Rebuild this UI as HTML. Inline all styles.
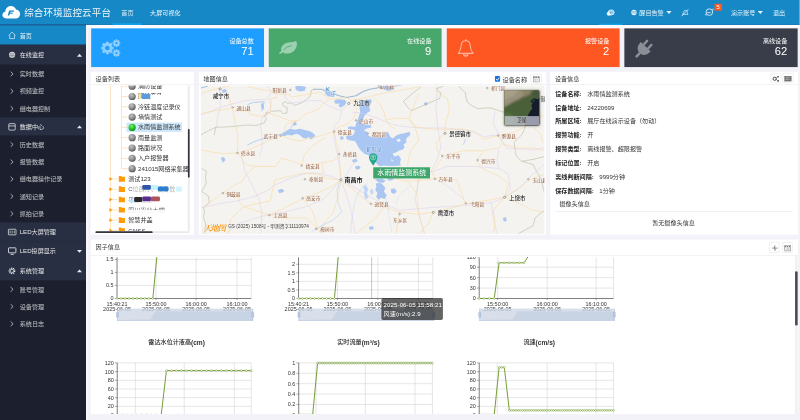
<!DOCTYPE html>
<html lang="zh-CN"><head><meta charset="utf-8"><title>综合环境监控云平台</title>
<style>
html,body{margin:0;padding:0;width:800px;height:420px;overflow:hidden;background:#f2f2f8;}
#app{position:absolute;left:0;top:0;width:1860.47px;height:976.74px;transform:scale(0.43);transform-origin:0 0;font-family:"Liberation Sans","Noto Sans CJK SC",sans-serif;overflow:hidden;background:#f2f2f8;}
#app div,#app svg{position:absolute;box-sizing:border-box;}
#app svg{overflow:visible;}
.t{white-space:nowrap;}
svg text{font-family:"Liberation Sans","Noto Sans CJK SC",sans-serif;}
</style></head><body><div id="app">
<div style="left:199.77px;top:58.14px;width:1660.7px;height:7.44px;background:#fbfafd;"></div>
<div style="left:199.77px;top:58.14px;width:5.35px;height:918.6px;background:#f8f7fb;"></div>
<div style="left:0px;top:57.91px;width:199.53px;height:918.84px;background:#1c202e;"></div>
<div style="left:0px;top:57.91px;width:199.53px;height:46.05px;background:#1688c6;"></div>
<div style="left:0px;top:103.95px;width:199.53px;height:46.28px;background:#282f42;"></div>
<div style="left:0px;top:273.26px;width:199.53px;height:42.09px;background:#282f42;"></div>
<div style="left:0px;top:516.98px;width:199.53px;height:44.88px;background:#282f42;"></div>
<div style="left:0px;top:561.86px;width:199.53px;height:44.88px;background:#282f42;"></div>
<div style="left:0px;top:606.74px;width:199.53px;height:44.88px;background:#282f42;"></div>
<div class="t" style="left:45.81px;top:73.49px;font-size:14.2px;line-height:20px;color:rgba(255,255,255,.88);font-weight:normal;">首页</div>
<div class="t" style="left:45.81px;top:118.14px;font-size:14.2px;line-height:20px;color:rgba(255,255,255,.88);font-weight:normal;">在线监控</div>
<div class="t" style="left:45.81px;top:161.86px;font-size:14.2px;line-height:20px;color:rgba(255,255,255,.72);font-weight:normal;">实时数据</div>
<div class="t" style="left:45.81px;top:202.09px;font-size:14.2px;line-height:20px;color:rgba(255,255,255,.72);font-weight:normal;">视频监控</div>
<div class="t" style="left:45.81px;top:242.33px;font-size:14.2px;line-height:20px;color:rgba(255,255,255,.72);font-weight:normal;">继电器控制</div>
<div class="t" style="left:45.81px;top:284.88px;font-size:14.2px;line-height:20px;color:rgba(255,255,255,.88);font-weight:normal;">数据中心</div>
<div class="t" style="left:45.81px;top:326.05px;font-size:14.2px;line-height:20px;color:rgba(255,255,255,.72);font-weight:normal;">历史数据</div>
<div class="t" style="left:45.81px;top:366.28px;font-size:14.2px;line-height:20px;color:rgba(255,255,255,.72);font-weight:normal;">报警数据</div>
<div class="t" style="left:45.81px;top:406.51px;font-size:14.2px;line-height:20px;color:rgba(255,255,255,.72);font-weight:normal;">继电器操作记录</div>
<div class="t" style="left:45.81px;top:446.51px;font-size:14.2px;line-height:20px;color:rgba(255,255,255,.72);font-weight:normal;">通知记录</div>
<div class="t" style="left:45.81px;top:486.74px;font-size:14.2px;line-height:20px;color:rgba(255,255,255,.72);font-weight:normal;">抓拍记录</div>
<div class="t" style="left:45.81px;top:529.77px;font-size:14.2px;line-height:20px;color:rgba(255,255,255,.88);font-weight:normal;">LED大屏管理</div>
<div class="t" style="left:45.81px;top:573.72px;font-size:14.2px;line-height:20px;color:rgba(255,255,255,.88);font-weight:normal;">LED投屏显示</div>
<div class="t" style="left:45.81px;top:619.77px;font-size:14.2px;line-height:20px;color:rgba(255,255,255,.88);font-weight:normal;">系统管理</div>
<div class="t" style="left:45.81px;top:662.79px;font-size:14.2px;line-height:20px;color:rgba(255,255,255,.72);font-weight:normal;">账号管理</div>
<div class="t" style="left:45.81px;top:702.79px;font-size:14.2px;line-height:20px;color:rgba(255,255,255,.72);font-weight:normal;">设备管理</div>
<div class="t" style="left:45.81px;top:743.02px;font-size:14.2px;line-height:20px;color:rgba(255,255,255,.72);font-weight:normal;">系统日志</div>
<svg style="left:0px;top:57.91px;" width="199.53" height="918.84" viewBox="0 24.9 85.8 395.1"><path d="M10.6 71.60000000000001 L13.1 73.9 L10.6 76.2" fill="none" stroke="rgba(255,255,255,.8)" stroke-width="0.75"/><path d="M10.6 88.9 L13.1 91.2 L10.6 93.5" fill="none" stroke="rgba(255,255,255,.8)" stroke-width="0.75"/><path d="M10.6 106.2 L13.1 108.5 L10.6 110.8" fill="none" stroke="rgba(255,255,255,.8)" stroke-width="0.75"/><path d="M10.6 142.2 L13.1 144.5 L10.6 146.8" fill="none" stroke="rgba(255,255,255,.8)" stroke-width="0.75"/><path d="M10.6 159.5 L13.1 161.8 L10.6 164.10000000000002" fill="none" stroke="rgba(255,255,255,.8)" stroke-width="0.75"/><path d="M10.6 176.79999999999998 L13.1 179.1 L10.6 181.4" fill="none" stroke="rgba(255,255,255,.8)" stroke-width="0.75"/><path d="M10.6 194.0 L13.1 196.3 L10.6 198.60000000000002" fill="none" stroke="rgba(255,255,255,.8)" stroke-width="0.75"/><path d="M10.6 211.29999999999998 L13.1 213.6 L10.6 215.9" fill="none" stroke="rgba(255,255,255,.8)" stroke-width="0.75"/><path d="M10.6 287.0 L13.1 289.3 L10.6 291.6" fill="none" stroke="rgba(255,255,255,.8)" stroke-width="0.75"/><path d="M10.6 304.2 L13.1 306.5 L10.6 308.8" fill="none" stroke="rgba(255,255,255,.8)" stroke-width="0.75"/><path d="M10.6 321.5 L13.1 323.8 L10.6 326.1" fill="none" stroke="rgba(255,255,255,.8)" stroke-width="0.75"/><path d="M77 56.599999999999994 L79.5 53.8 L82 56.599999999999994 Z" fill="rgba(255,255,255,.9)"/><path d="M77 128.3 L79.5 125.5 L82 128.3 Z" fill="rgba(255,255,255,.9)"/><path d="M77 249.89999999999998 L79.5 252.7 L82 249.89999999999998 Z" fill="rgba(255,255,255,.9)"/><path d="M77 272.3 L79.5 269.5 L82 272.3 Z" fill="rgba(255,255,255,.9)"/><path d="M8.7 35.4 L12.1 32 L15.5 35.4 M9.7 34.8 V38.5 H14.5 V34.8" fill="none" stroke="rgba(255,255,255,.85)" stroke-width="0.7"/><circle cx="12.1" cy="54.8" r="3.1" fill="rgba(255,255,255,.8)"/><path d="M9.8 53.8 H14.4 M9.6 55.4 H14.6 M10.8 56.8 H13.4" stroke="#282f42" stroke-width="0.4" fill="none"/><rect x="8.8" y="123.6" width="6.4" height="6.4" rx="0.6" fill="none" stroke="rgba(255,255,255,.85)" stroke-width="0.8"/><path d="M8.8 125.9 H15.2" stroke="rgba(255,255,255,.85)" stroke-width="0.8"/><rect x="8.4" y="229.2" width="7.6" height="5.6" rx="0.5" fill="none" stroke="rgba(255,255,255,.85)" stroke-width="0.8"/><path d="M10.1 230.6 V233.4 M12.2 230.6 V233.4 M14.3 230.6 V233.4" stroke="rgba(255,255,255,.85)" stroke-width="0.7"/><rect x="8.5" y="247.8" width="7.4" height="5" rx="0.5" fill="none" stroke="rgba(255,255,255,.85)" stroke-width="0.9"/><path d="M10.6 254.3 H13.8" stroke="rgba(255,255,255,.85)" stroke-width="0.9"/><circle cx="12" cy="270.9" r="2.7" fill="none" stroke="rgba(255,255,255,.85)" stroke-width="1.3" stroke-dasharray="1.2 0.7"/><circle cx="12" cy="270.9" r="1.6" fill="none" stroke="rgba(255,255,255,.85)" stroke-width="0.7"/></svg>
<div style="left:0px;top:0px;width:1860.47px;height:57.91px;background:#1688c6;"></div>
<div style="left:0px;top:56.05px;width:1860.47px;height:1.86px;background:rgba(0,70,130,.28);"></div>
<div style="left:0px;top:57.44px;width:199.77px;height:1.4px;background:#1d4f7e;"></div>
<svg style="left:0px;top:0px;" width="55.81" height="57.91" viewBox="0 0 24 24.9"><path d="M6.2 18.4 C3.6 18.4 2.4 16.6 2.4 15 C2.4 13.2 3.7 11.9 5.3 11.7 C5.4 8.7 7.8 6.1 10.9 6.1 C13.3 6.1 15.2 7.5 16 9.5 C18.4 9.7 20.1 11.6 20.1 13.9 C20.1 16.4 18.2 18.4 15.8 18.4 Z" fill="#fff"/><path d="M9.2 10.6 H14.2 L13.8 11.8 H10.6 L10.3 12.7 H13 L12.6 13.8 H9.9 L9.3 15.6 H7.7 Z" fill="#1688c6"/></svg>
<div class="t" style="left:56.28px;top:13.57px;font-size:22px;line-height:31px;color:rgba(255,255,255,.92);font-weight:normal;letter-spacing:0.45px;">综合环境监控云平台</div>
<div class="t" style="left:282.09px;top:19.30px;font-size:14.2px;line-height:20px;color:rgba(255,255,255,.85);font-weight:normal;">首页</div>
<div class="t" style="left:349.07px;top:19.30px;font-size:14.2px;line-height:20px;color:rgba(255,255,255,.95);font-weight:normal;">大屏可视化</div>
<div style="left:261.86px;top:53.95px;width:68.37px;height:3.95px;background:#12a3ea;"></div>
<div style="left:1393.02px;top:54.88px;width:53.49px;height:3.02px;background:#12a3ea;"></div>
<div class="t" style="left:1486.74px;top:19.30px;font-size:14.2px;line-height:20px;color:rgba(255,255,255,.9);font-weight:normal;">醒目告警</div>
<div class="t" style="left:1700px;top:19.30px;font-size:14.2px;line-height:20px;color:rgba(255,255,255,.9);font-weight:normal;">演示账号</div>
<div class="t" style="left:1797.67px;top:19.30px;font-size:14.2px;line-height:20px;color:rgba(255,255,255,.9);font-weight:normal;">退出</div>
<svg style="left:1372.09px;top:0px;" width="488.37" height="57.91" viewBox="590 0 210 24.9"><ellipse cx="611.2" cy="12.4" rx="3" ry="2.5" fill="rgba(255,255,255,.55)" stroke="rgba(255,255,255,.9)" stroke-width="0.8"/><ellipse cx="609" cy="13.7" rx="2.3" ry="2" fill="rgba(255,255,255,.9)"/><circle cx="610.4" cy="12.9" r="0.75" fill="#1688c6"/><circle cx="634" cy="12.5" r="2.7" fill="rgba(255,255,255,.9)"/><path d="M631.8 11.6 H636.2 M631.6 13 H636.4" stroke="#1688c6" stroke-width="0.45"/><path d="M666.4 11.1 H671.6 L669 14.1 Z" fill="rgba(255,255,255,.9)"/><path d="M757.8 11.1 H763 L760.4 14.1 Z" fill="rgba(255,255,255,.9)"/><path d="M682.6 14.4 C683.4 13.6 683.2 11.2 684.9 10.4 C686.6 9.8 687.5 11.4 687.4 12.6 C687.4 13.6 687.8 14 688 14.4 Z" fill="none" stroke="rgba(255,255,255,.9)" stroke-width="0.7"/><path d="M681.6 16.2 L688.4 9.2" stroke="rgba(255,255,255,.9)" stroke-width="0.8"/><circle cx="709.4" cy="12.1" r="3.3" fill="none" stroke="rgba(255,255,255,.9)" stroke-width="0.85"/><path d="M707.2 12.6 H710.8" stroke="rgba(255,255,255,.9)" stroke-width="0.8"/><path d="M706.3 13.6 C704.6 14.6 705 15.4 707 14.9 M712.6 10.4 C714.4 9.4 713.8 8.7 711.9 9.3" fill="none" stroke="rgba(255,255,255,.9)" stroke-width="0.6"/></svg>
<div style="left:1662.09px;top:8.6px;width:16.74px;height:16.05px;background:#ff5722;border-radius:1px;"></div>
<div class="t" style="left:1670.23px;transform:translateX(-50%);top:7.13px;font-size:13.5px;line-height:19px;color:#fff;font-weight:normal;">5</div>
<div style="left:211.63px;top:65.81px;width:402.33px;height:90px;background:#1e9fff;"></div>
<div class="t" style="right:1270.23px;top:86.05px;font-size:14.2px;line-height:20px;color:#fff;font-weight:normal;">设备总数</div>
<div class="t" style="right:1270.7px;top:101.30px;font-size:26px;line-height:36px;color:#fff;font-weight:normal;">71</div>
<div style="left:625.12px;top:65.81px;width:402.09px;height:90px;background:#48a86c;"></div>
<div class="t" style="right:856.98px;top:86.05px;font-size:14.2px;line-height:20px;color:#fff;font-weight:normal;">在线设备</div>
<div class="t" style="right:857.44px;top:101.30px;font-size:26px;line-height:36px;color:#fff;font-weight:normal;">9</div>
<div style="left:1038.6px;top:65.81px;width:402.33px;height:90px;background:#ff5722;"></div>
<div class="t" style="right:443.26px;top:86.05px;font-size:14.2px;line-height:20px;color:#fff;font-weight:normal;">报警设备</div>
<div class="t" style="right:443.72px;top:101.30px;font-size:26px;line-height:36px;color:#fff;font-weight:normal;">2</div>
<div style="left:1452.33px;top:65.81px;width:402.33px;height:90px;background:#393d49;"></div>
<div class="t" style="right:29.53px;top:86.05px;font-size:14.2px;line-height:20px;color:#fff;font-weight:normal;">离线设备</div>
<div class="t" style="right:30px;top:101.30px;font-size:26px;line-height:36px;color:#fff;font-weight:normal;">62</div>
<svg style="left:200px;top:58.14px;" width="1660.47" height="104.65" viewBox="86 25 714 45"><g opacity="0.5"><circle cx="107.3" cy="48.1" r="3.61" fill="none" stroke="#fff" stroke-width="2.61"/><rect x="105.91" y="41.80" width="2.77" height="1.69" rx="0.38" fill="#fff" transform="rotate(0.0 107.3 48.1)"/><rect x="105.91" y="41.80" width="2.77" height="1.69" rx="0.38" fill="#fff" transform="rotate(45.0 107.3 48.1)"/><rect x="105.91" y="41.80" width="2.77" height="1.69" rx="0.38" fill="#fff" transform="rotate(90.0 107.3 48.1)"/><rect x="105.91" y="41.80" width="2.77" height="1.69" rx="0.38" fill="#fff" transform="rotate(135.0 107.3 48.1)"/><rect x="105.91" y="41.80" width="2.77" height="1.69" rx="0.38" fill="#fff" transform="rotate(180.0 107.3 48.1)"/><rect x="105.91" y="41.80" width="2.77" height="1.69" rx="0.38" fill="#fff" transform="rotate(225.0 107.3 48.1)"/><rect x="105.91" y="41.80" width="2.77" height="1.69" rx="0.38" fill="#fff" transform="rotate(270.0 107.3 48.1)"/><rect x="105.91" y="41.80" width="2.77" height="1.69" rx="0.38" fill="#fff" transform="rotate(315.0 107.3 48.1)"/><circle cx="116.4" cy="43.2" r="2.06" fill="none" stroke="#fff" stroke-width="1.81"/><rect x="115.56" y="39.40" width="1.67" height="1.14" rx="0.23" fill="#fff" transform="rotate(0.0 116.4 43.2)"/><rect x="115.56" y="39.40" width="1.67" height="1.14" rx="0.23" fill="#fff" transform="rotate(45.0 116.4 43.2)"/><rect x="115.56" y="39.40" width="1.67" height="1.14" rx="0.23" fill="#fff" transform="rotate(90.0 116.4 43.2)"/><rect x="115.56" y="39.40" width="1.67" height="1.14" rx="0.23" fill="#fff" transform="rotate(135.0 116.4 43.2)"/><rect x="115.56" y="39.40" width="1.67" height="1.14" rx="0.23" fill="#fff" transform="rotate(180.0 116.4 43.2)"/><rect x="115.56" y="39.40" width="1.67" height="1.14" rx="0.23" fill="#fff" transform="rotate(225.0 116.4 43.2)"/><rect x="115.56" y="39.40" width="1.67" height="1.14" rx="0.23" fill="#fff" transform="rotate(270.0 116.4 43.2)"/><rect x="115.56" y="39.40" width="1.67" height="1.14" rx="0.23" fill="#fff" transform="rotate(315.0 116.4 43.2)"/><circle cx="116.4" cy="53.1" r="2.06" fill="none" stroke="#fff" stroke-width="1.81"/><rect x="115.56" y="49.30" width="1.67" height="1.14" rx="0.23" fill="#fff" transform="rotate(0.0 116.4 53.1)"/><rect x="115.56" y="49.30" width="1.67" height="1.14" rx="0.23" fill="#fff" transform="rotate(45.0 116.4 53.1)"/><rect x="115.56" y="49.30" width="1.67" height="1.14" rx="0.23" fill="#fff" transform="rotate(90.0 116.4 53.1)"/><rect x="115.56" y="49.30" width="1.67" height="1.14" rx="0.23" fill="#fff" transform="rotate(135.0 116.4 53.1)"/><rect x="115.56" y="49.30" width="1.67" height="1.14" rx="0.23" fill="#fff" transform="rotate(180.0 116.4 53.1)"/><rect x="115.56" y="49.30" width="1.67" height="1.14" rx="0.23" fill="#fff" transform="rotate(225.0 116.4 53.1)"/><rect x="115.56" y="49.30" width="1.67" height="1.14" rx="0.23" fill="#fff" transform="rotate(270.0 116.4 53.1)"/><rect x="115.56" y="49.30" width="1.67" height="1.14" rx="0.23" fill="#fff" transform="rotate(315.0 116.4 53.1)"/></g><g opacity="0.46"><path d="M296.2 41.1 C297.7 44 296.9 49 293 51.7 C289.4 54.1 284.8 54.1 282.5 52.3 L280.4 54 C279.5 54.5 278.7 53.5 279.4 52.8 L281.4 50.9 C280 47.5 283 43.6 288 42.6 C291.6 42 294.4 42.2 296.2 41.1 Z" fill="#fff"/></g><path d="M283.8 50 C285.6 47.6 288.4 46.2 291.4 45.9" fill="none" stroke="#48a86c" stroke-width="0.8" stroke-linecap="round"/><g opacity="0.55" fill="none" stroke="#fff" stroke-width="1.1" stroke-linejoin="round" stroke-linecap="round"><path d="M465.7 39.5 V40.6"/><path d="M458.3 53.4 C460.6 51 461 48.6 461.2 45.6 C461.4 42.4 463.2 40.8 465.7 40.8 C468.2 40.8 470 42.4 470.2 45.6 C470.4 48.6 470.8 51 473.1 53.4 Z"/><path d="M463.5 54.4 C463.9 56.9 467.5 56.9 467.9 54.4" fill="rgba(255,255,255,.5)"/></g><g transform="translate(645.6 46.9) rotate(43)" fill="#fff" opacity="0.42"><rect x="-4.15" y="-6.6" width="2.4" height="7" rx="1.2"/><rect x="1.75" y="-6.6" width="2.4" height="7" rx="1.2"/><path d="M-6.7 -0.2 H6.7 V1.9 A6.7 6.7 0 0 1 -6.7 1.9 Z"/><rect x="-1.3" y="8" width="2.6" height="6.4" rx="1.3"/></g></svg>
<div style="left:211.4px;top:167.44px;width:239.77px;height:378.14px;background:#fff;"></div>
<div style="left:211.4px;top:167.44px;width:239.77px;height:29.3px;border-bottom:1px solid #e2e2e2;"></div>
<div class="t" style="left:222.33px;top:173.02px;font-size:14.2px;line-height:20px;color:#333;font-weight:normal;">设备列表</div>
<div style="left:462.33px;top:167.44px;width:807.44px;height:378.14px;background:#fff;"></div>
<div style="left:462.33px;top:167.44px;width:807.44px;height:29.3px;border-bottom:1px solid #e2e2e2;"></div>
<div class="t" style="left:473.26px;top:173.02px;font-size:14.2px;line-height:20px;color:#333;font-weight:normal;">地图信息</div>
<div style="left:1279.53px;top:167.44px;width:576.05px;height:378.14px;background:#fff;"></div>
<div style="left:1279.53px;top:167.44px;width:576.05px;height:29.3px;border-bottom:1px solid #e2e2e2;"></div>
<div class="t" style="left:1290.47px;top:173.02px;font-size:14.2px;line-height:20px;color:#333;font-weight:normal;">设备信息</div>
<div style="left:211.4px;top:557.44px;width:1644.19px;height:405.12px;background:#fff;overflow:hidden;"></div>
<div style="left:211.4px;top:557.44px;width:1644.19px;height:36.28px;border-bottom:1px solid #e2e2e2;"></div>
<div class="t" style="left:222.33px;top:565.35px;font-size:14.2px;line-height:20px;color:#333;font-weight:normal;">因子信息</div>
<div style="left:211.63px;top:198.6px;width:230.7px;height:338.6px;overflow:hidden;">
<div style="left:82.79px;top:86.14px;width:128.37px;height:22.09px;background:#cfe8fb;"></div>
<svg style="left:0;top:0;" width="230.7" height="338.6" viewBox="91 85.4 99.19999999999999 145.6"><path d="M110.3 85.4 V231 M121.3 85.4 V168.48000000000002" stroke="#f9cf8f" stroke-width="0.55" fill="none"/><path d="M121.3 86.00 H127.6" stroke="#f9cf8f" stroke-width="0.55"/><path d="M121.3 96.31 H127.6" stroke="#f9cf8f" stroke-width="0.55"/><path d="M121.3 106.62 H127.6" stroke="#f9cf8f" stroke-width="0.55"/><path d="M121.3 116.93 H127.6" stroke="#f9cf8f" stroke-width="0.55"/><path d="M121.3 127.24 H127.6" stroke="#f9cf8f" stroke-width="0.55"/><path d="M121.3 137.55 H127.6" stroke="#f9cf8f" stroke-width="0.55"/><path d="M121.3 147.86 H127.6" stroke="#f9cf8f" stroke-width="0.55"/><path d="M121.3 158.17 H127.6" stroke="#f9cf8f" stroke-width="0.55"/><path d="M121.3 168.48 H127.6" stroke="#f9cf8f" stroke-width="0.55"/><defs><radialGradient id="gb" cx="0.4" cy="0.32" r="0.75"><stop offset="0" stop-color="#c4c4c4"/><stop offset="0.55" stop-color="#8c8c8c"/><stop offset="1" stop-color="#4e4e4e"/></radialGradient><radialGradient id="gg" cx="0.4" cy="0.32" r="0.75"><stop offset="0" stop-color="#7dee6a"/><stop offset="0.55" stop-color="#22c32a"/><stop offset="1" stop-color="#0f8f1c"/></radialGradient></defs><circle cx="132" cy="86.00" r="3.6" fill="url(#gb)"/><circle cx="132" cy="96.31" r="3.6" fill="url(#gb)"/><circle cx="132" cy="106.62" r="3.6" fill="url(#gb)"/><circle cx="132" cy="116.93" r="3.6" fill="url(#gb)"/><circle cx="132" cy="127.24" r="3.6" fill="url(#gg)"/><circle cx="132" cy="137.55" r="3.6" fill="url(#gb)"/><circle cx="132" cy="147.86" r="3.6" fill="url(#gb)"/><circle cx="132" cy="158.17" r="3.6" fill="url(#gb)"/><circle cx="132" cy="168.48" r="3.6" fill="url(#gb)"/><path d="M110.3 178.79 H117.6" stroke="#f9cf8f" stroke-width="0.55"/><path d="M109.2 176.89 L112.4 178.79 L109.2 180.69 Z" fill="#ff9a0a"/><path d="M118.6 175.89 H121 L121.6 176.59 H124.8 V181.49 H118.6 Z" fill="#ff9a0a"/><path d="M110.3 189.10 H117.6" stroke="#f9cf8f" stroke-width="0.55"/><path d="M109.2 187.20 L112.4 189.10 L109.2 191.00 Z" fill="#ff9a0a"/><path d="M118.6 186.20 H121 L121.6 186.90 H124.8 V191.80 H118.6 Z" fill="#ff9a0a"/><path d="M110.3 199.41 H117.6" stroke="#f9cf8f" stroke-width="0.55"/><path d="M109.2 197.51 L112.4 199.41 L109.2 201.31 Z" fill="#ff9a0a"/><path d="M118.6 196.51 H121 L121.6 197.21 H124.8 V202.11 H118.6 Z" fill="#ff9a0a"/><path d="M110.3 209.72 H117.6" stroke="#f9cf8f" stroke-width="0.55"/><path d="M109.2 207.82 L112.4 209.72 L109.2 211.62 Z" fill="#ff9a0a"/><path d="M118.6 206.82 H121 L121.6 207.52 H124.8 V212.42 H118.6 Z" fill="#ff9a0a"/><path d="M110.3 220.03 H117.6" stroke="#f9cf8f" stroke-width="0.55"/><path d="M109.2 218.13 L112.4 220.03 L109.2 221.93 Z" fill="#ff9a0a"/><path d="M118.6 217.13 H121 L121.6 217.83 H124.8 V222.73 H118.6 Z" fill="#ff9a0a"/><path d="M110.3 230.34 H117.6" stroke="#f9cf8f" stroke-width="0.55"/><path d="M109.2 228.44 L112.4 230.34 L109.2 232.24 Z" fill="#ff9a0a"/><path d="M118.6 227.44 H121 L121.6 228.14 H124.8 V233.04 H118.6 Z" fill="#ff9a0a"/></svg>
<div class="t" style="left:109.3px;top:-8.37px;font-size:14.2px;line-height:20px;color:#333;">消防设备</div>
<div class="t" style="left:109.3px;top:15.60px;font-size:14.2px;line-height:20px;color:#333;">网关产品</div>
<div class="t" style="left:109.3px;top:39.58px;font-size:14.2px;line-height:20px;color:#333;">冷链温度记录仪</div>
<div class="t" style="left:109.3px;top:63.56px;font-size:14.2px;line-height:20px;color:#333;">墒情测试</div>
<div class="t" style="left:109.3px;top:87.53px;font-size:14.2px;line-height:20px;color:#333;">水雨情监测系统</div>
<div class="t" style="left:109.3px;top:111.51px;font-size:14.2px;line-height:20px;color:#333;">雨量监测</div>
<div class="t" style="left:109.3px;top:135.49px;font-size:14.2px;line-height:20px;color:#333;">路面状况</div>
<div class="t" style="left:109.3px;top:159.47px;font-size:14.2px;line-height:20px;color:#333;">入户报警器</div>
<div class="t" style="left:109.3px;top:183.44px;font-size:14.2px;line-height:20px;color:#333;">241015网络采集器</div>
<div class="t" style="left:86.51px;top:207.42px;font-size:14.2px;line-height:20px;color:#333;">测试123</div>
<div class="t" style="left:86.51px;top:231.40px;font-size:14.2px;line-height:20px;color:#333;opacity:.8;">C位展厅、设备数</div>
<div class="t" style="left:86.51px;top:255.37px;font-size:14.2px;line-height:20px;color:#333;opacity:.8;">平台设备</div>
<div class="t" style="left:86.51px;top:279.35px;font-size:14.2px;line-height:20px;color:#333;opacity:.8;">四川农业大棚</div>
<div class="t" style="left:86.51px;top:303.33px;font-size:14.2px;line-height:20px;color:#333;">智慧井盖</div>
<div class="t" style="left:86.51px;top:327.30px;font-size:14.2px;line-height:20px;color:#333;">GNSS</div>
<div style="left:110.23px;top:17.93px;width:7.21px;height:13.49px;background:#f8e3a0;opacity:1;border-radius:3px;"></div>
<div style="left:117.44px;top:19.33px;width:20.93px;height:12.09px;background:#5b9be0;opacity:1;border-radius:3px;"></div>
<div style="left:137.91px;top:22.58px;width:31.86px;height:13.26px;background:#fff;opacity:1;border-radius:3px;"></div>
<div style="left:97.67px;top:232.79px;width:120.93px;height:15.81px;background:#fff;opacity:0.55;border-radius:3px;"></div>
<div style="left:119.77px;top:231.86px;width:19.77px;height:10.47px;background:#2d55a8;opacity:1;border-radius:3px;"></div>
<div style="left:139.53px;top:231.86px;width:16.28px;height:11.63px;background:#c4f1fb;opacity:1;border-radius:3px;"></div>
<div style="left:155.81px;top:235.12px;width:24.42px;height:11.63px;background:#2b7fd0;opacity:1;border-radius:3px;"></div>
<div style="left:197.67px;top:235.35px;width:13.95px;height:11.63px;background:#c4f1fb;opacity:0.8;border-radius:3px;"></div>
<div style="left:97.67px;top:260.49px;width:123.26px;height:13.02px;background:#fff;opacity:0.7;border-radius:3px;"></div>
<div style="left:88.37px;top:265.6px;width:16.28px;height:6.51px;background:#bfe6f7;opacity:1;border-radius:3px;"></div>
<div style="left:100px;top:259.09px;width:19.77px;height:12.09px;background:#2a2a2a;opacity:1;border-radius:3px;"></div>
<div style="left:119.77px;top:258.63px;width:19.77px;height:11.16px;background:#5a2d91;opacity:1;border-radius:3px;"></div>
<div style="left:139.53px;top:258.63px;width:20.93px;height:11.16px;background:#b0545c;opacity:1;border-radius:3px;"></div>
<div style="left:86.05px;top:289.81px;width:111.63px;height:8.6px;background:#fff;opacity:0.9;border-radius:3px;"></div>
<div style="left:100px;top:280.98px;width:102.33px;height:4.42px;background:#fff;opacity:0.6;border-radius:3px;"></div>
</div>
<div style="left:436.74px;top:198.6px;width:4.19px;height:338.6px;background:#e9e9ec;"></div>
<div style="left:436.74px;top:300px;width:4.19px;height:113.49px;background:#33343c;border-radius:3px;"></div>
<div style="left:221.63px;top:538.14px;width:219.3px;height:4.19px;background:#e9e9ec;border-radius:3px;"></div>
<div style="left:221.63px;top:538.14px;width:133.72px;height:4.19px;background:#33343c;border-radius:3px;"></div>
<svg style="left:467.44px;top:198.84px;" width="799.07" height="344.65" viewBox="201 85.5 343.6 148.2"><rect x="201" y="85.5" width="343.6" height="148.2" fill="#f5f3ef"/><clipPath id="mc"><rect x="201" y="85.5" width="343.6" height="148.2"/></clipPath><g clip-path="url(#mc)"><polyline points="313.3,89.2 321.7,89.2 330,92.4 339.5,95.7 346.7,97.5 356.2,95.7 363.3,91.5 370,89.2 380,87.4 392,86.4 402,85" fill="none" stroke="#9db8d6" stroke-width="1.1" stroke-linejoin="round" /><polyline points="201,88 208,86" fill="none" stroke="#9fc0ee" stroke-width="1.0" stroke-linejoin="round" /><polygon points="334.8,100 339,99.3 345,99.6 346.7,102 345,105 341,107.6 338.6,105.6 340,103.4 336,103.8 334.6,102.4" fill="#aac6f2"/><polygon points="383,86 392,86 395,89 389,91 384,89.5" fill="#aac6f2"/><polygon points="360,101 366,99.6 371.5,99.3 372,101.5 369.5,107 370.5,111 368,112.5 365,115 363.5,119 361.5,122.5 365,124.5 371,125 371.5,127.5 367,128.5 364,130 367,132 369,136 374,137.5 380,137 386,137.5 389,135.5 392,138 393,142 392,147 393.4,152 392,158 391,163 388,165.5 384,164 381,166.5 378,165 375,161 372,157 368,155 365,154 361,150.5 359,148 357,144 355,141 351,140.5 347,139.5 346,136.5 349,135 352,136 354.5,133.5 355,130 352,129.5 348,129 348.5,126.5 352,126.5 355.5,127 356,124 358.5,118 360.5,112 359.5,107" fill="#aac6f2"/><polygon points="388,135 391,138 393,138.4 396,135.6 400,133.9 404.8,133.3 409.5,131.8 410.6,134 409.5,136.3 407.6,137 406,139.9 407,142 403.6,144.6 405,147 403,149.4 398.8,150.6 395.2,153 392,153.4 391,140" fill="#aac6f2"/><polygon points="392,153 394.6,156.5 398.8,155.3 401.2,158.9 400,163.7 395.2,162.5 391.7,158.9" fill="#aac6f2"/><polygon points="385.7,132.4 388,132 389.6,135 391,138.7 388,139 386.6,136" fill="#aac6f2"/><polygon points="396.6,139.6 400,138.6 401,141 398,142" fill="#f5f3ef"/><polygon points="352,160 356,158.6 358,161 354,163" fill="#aac6f2"/><polygon points="355,166.6 359,165.4 361,168 357,170" fill="#aac6f2"/><polygon points="340,137 343,136 344,139 341,140" fill="#aac6f2"/><polygon points="376,183.4 380,182.4 383,184.6 385.6,188 384,191.6 387,195 385,199 381,197.6 379,200 376.4,197 377.6,193 375.4,189.6 376.6,186.6" fill="#aac6f2"/><polygon points="375,179 382,178.6 386,180.6 383,183 378,182" fill="#aac6f2"/><polygon points="391,189 395,188.4 397,191.6 394,194 391.4,192.4" fill="#aac6f2"/><polygon points="386,176 392,176.6 394,179.6 389,180.6" fill="#aac6f2"/><polygon points="363,186 366,185 368.6,188.6 367,193 369,197 366,199.6 364,195 364.6,190.6" fill="#c3d6f5"/><polygon points="370,190 373,189 374,193 371,194.6" fill="#c3d6f5"/><polygon points="376,160.6 384,160 392,161 400,162 401,165.4 393,166 385,165.6 378,165" fill="#aac6f2"/><polygon points="281.3,134 285,131.6 290,128.8 295,129.6 300,128.8 305,130 310,131.3 313,133 315.4,135.2 314,137.6 311.3,139.4 308.6,137 306,138.6 302.5,137.5 300,135 296.3,133.8 292,135.4 288,134.6 285,136 282,135.6" fill="#aac6f2"/><polyline points="247.5,145 252.5,142.5 258.8,140 265,138.4 271.3,137.5 276,135.6 281.3,134" fill="none" stroke="#aac6f2" stroke-width="0.8" stroke-linejoin="round" /><polyline points="295,122.5 292.6,125 290.6,128.4" fill="none" stroke="#aac6f2" stroke-width="0.7" stroke-linejoin="round" /><polygon points="293,123 296,122 297,124.6 294,126" fill="#aac6f2"/><polygon points="261,104 263,103 264,108 262,110" fill="#aac6f2"/><polygon points="279,190 283,189 284,191.6 280,192.6" fill="#aac6f2"/><polygon points="222,90 226,89 227,92 223,93" fill="#aac6f2"/><polygon points="369,227 373,226 374,229 370,230" fill="#aac6f2"/><polyline points="466,139 464.6,142 463.6,144.6" fill="none" stroke="#aac6f2" stroke-width="0.7" stroke-linejoin="round" /><polygon points="424,103 427,102 428,104.6 425,105.6" fill="#aac6f2"/><polygon points="503,218 506,217 507,220.6 504,221.6" fill="#aac6f2"/><polyline points="351,233 352,220 354,206 357,196 362,188 368,183" fill="none" stroke="#c9dbf6" stroke-width="0.6" stroke-linejoin="round" /><polyline points="392,233 390,220 388,208 386,198" fill="none" stroke="#cfdff7" stroke-width="0.5" stroke-linejoin="round" /><polyline points="411,186 405,190 399,196 396,204" fill="none" stroke="#cfdff7" stroke-width="0.5" stroke-linejoin="round" /><polyline points="201,134.9 208,131 216,127.2 229.8,126.7 247.6,124.9 256,125.5 264.3,123 266.7,118.3 264.6,116 267.6,114.4 266,112.6 269.6,112.8 271.4,111.2 281,110.6 283.3,113.6 287,113 287.5,107.6 283.3,105.8 282.7,102.9 285.7,101.7 288,103.4 291,102.6 295.5,105.2 302.6,102.3 310.4,96.3 311.5,90.4 314.5,89.2" fill="none" stroke="#a9b196" stroke-width="0.5" stroke-linejoin="round" /><polyline points="214.3,135 215.4,130 216,127.2" fill="none" stroke="#a9b196" stroke-width="0.5" stroke-linejoin="round" /><polyline points="201.9,168.3 206.7,171.2 205.7,177 206.4,183.6 201.9,191.2 208.6,196 209.5,202.6 203.8,207.4 204.6,212 203.8,217.9 206,224 204.6,233.7" fill="none" stroke="#a9b196" stroke-width="0.5" stroke-linejoin="round" /><polyline points="421,86.9 412,94 403.8,101.2 407,106 411.4,110.7 425,104.6 440,98.3 441,92.6 436.2,88.8 443.8,86" fill="none" stroke="#a9b196" stroke-width="0.5" stroke-linejoin="round" /><polyline points="459,86 462,89.6 465.8,92.6 466,97 467.7,102.2 472,105.6 478.1,108.8 484,108 491.5,107.9 497,110 502.9,111.7 510,115 518,120 525.8,126 524,130.6 522,134.6 518,138.6 514.4,142.2 515,148 516.3,155.5 519,158.6 522,161.2 533.4,164.5 537.2,172.2 542,179.8 543,186 544.6,193" fill="none" stroke="#a9b196" stroke-width="0.5" stroke-linejoin="round" /><polyline points="522,161.2 533.4,159.3 544.6,156.5" fill="none" stroke="#a9b196" stroke-width="0.5" stroke-linejoin="round" /><polyline points="544.6,210.6 539,214.6 535.3,217.9 533.4,225.5 526,229.6 518.2,233.7" fill="none" stroke="#a9b196" stroke-width="0.5" stroke-linejoin="round" /><polyline points="201.2,114.8 210,111.6 220.2,107.6 235.7,102.9 250,99.9 266.7,99.3 271.4,92.1 267.9,86.2" fill="none" stroke="#d8cdf0" stroke-width="0.5" stroke-linejoin="round" /><polyline points="219.6,88.6 220.8,96.9 220.2,107.6 218,116 216.6,127" fill="none" stroke="#d8cdf0" stroke-width="0.5" stroke-linejoin="round" /><polyline points="271.4,99.3 270.2,108.8 263.1,116 260.7,124.3 261.9,135 262.6,146 260,156" fill="none" stroke="#d8cdf0" stroke-width="0.5" stroke-linejoin="round" /><polyline points="283.3,92.1 286.9,99.3 292,103 300,102 310,100.6 320.5,100.5 330,106.4 341.9,110.6 346.7,105.2 351.4,100.5" fill="none" stroke="#d8cdf0" stroke-width="0.5" stroke-linejoin="round" /><polyline points="341.9,110.6 339.5,120.7 334.8,125.5 333.6,132.6 335,142 337,152 339,162 340.4,172 341,180" fill="none" stroke="#d8cdf0" stroke-width="0.5" stroke-linejoin="round" /><polyline points="241.9,156.9 244.8,170.2 253.4,187.4 259.1,198.8 261.9,212.2 261,233.7" fill="none" stroke="#d8cdf0" stroke-width="0.5" stroke-linejoin="round" /><polyline points="201.9,207.4 219.1,203.6 238.1,200.7 255.3,196 266.7,191.2 276.2,184.5 291.5,177.9 306.7,173.1 318.2,173.1 333.4,176.9 341,180" fill="none" stroke="#d8cdf0" stroke-width="0.5" stroke-linejoin="round" /><polyline points="341,180 323.9,198.8 306.7,206.5 283.9,212.2 262.9,216 238.1,223.6 226.7,233.7" fill="none" stroke="#d8cdf0" stroke-width="0.5" stroke-linejoin="round" /><polyline points="400,126 419,127.9 445.7,127.9 472.4,130.7 483.9,136.5 499,134.6" fill="none" stroke="#d8cdf0" stroke-width="0.5" stroke-linejoin="round" /><polyline points="352,112 362,113 372,116 382,120 392,124 400,126" fill="none" stroke="#d8cdf0" stroke-width="0.5" stroke-linejoin="round" /><polyline points="437.2,85.5 437.2,90.7 436.2,109.8 438.1,127.9 441,147.9 437,160 430.5,172.2 419,179.8 415.2,198.8 419,214.1 423.8,231.2 424.4,233.7" fill="none" stroke="#d8cdf0" stroke-width="0.5" stroke-linejoin="round" /><polyline points="495.3,111.7 493.4,123.1 499.1,134.6 506.7,147.9 533.4,149.8 544.6,147.9" fill="none" stroke="#d8cdf0" stroke-width="0.5" stroke-linejoin="round" /><polyline points="499,147.9 497.2,161.2 499.1,168.3" fill="none" stroke="#d8cdf0" stroke-width="0.5" stroke-linejoin="round" /><polyline points="430.5,172.2 447.6,166.4 476.2,166.4 499.1,168.3 508.6,174.1 510.5,189.3 504.8,196.9" fill="none" stroke="#d8cdf0" stroke-width="0.5" stroke-linejoin="round" /><polyline points="341,180 352,186 364,193 376,200 388,205.6 400,210.3 433.4,207.4 464.8,205.5 491.5,202.6 504.8,197.9 522,185.5 534,173 544.6,164.5" fill="none" stroke="#d8cdf0" stroke-width="0.5" stroke-linejoin="round" /><polyline points="438,179.8 449.6,187.4 464.8,199.8" fill="none" stroke="#d8cdf0" stroke-width="0.5" stroke-linejoin="round" /><polyline points="491.5,202.6 493.4,217.9 497.2,233.7" fill="none" stroke="#d8cdf0" stroke-width="0.5" stroke-linejoin="round" /><polyline points="341,180 345,190 349,202 352,214 354,226 355,233.7" fill="none" stroke="#d8cdf0" stroke-width="0.5" stroke-linejoin="round" /><polyline points="341,180 347,174 352,166 357,158" fill="none" stroke="#d8cdf0" stroke-width="0.5" stroke-linejoin="round" /><polyline points="201.2,93.9 211.9,89.8 219,88.6 223.8,87.4 230,85.5" fill="none" stroke="#f9dba4" stroke-width="0.62" stroke-linejoin="round" /><polyline points="247.6,86.2 257.1,88.6 271.4,91 276.2,93.9 290,94.5 291.9,96.9 309.8,93.9 320.5,92.1 330,99.3 346.7,97.5 351.4,100.5" fill="none" stroke="#f9dba4" stroke-width="0.62" stroke-linejoin="round" /><polyline points="201.2,113.6 215.5,110.6 232.1,108.2 233.3,110.6 248.8,110.6 250,114.2 261.9,116.5 270.2,112.4 271.4,106.4 269,99.3 277.4,96.9" fill="none" stroke="#f9dba4" stroke-width="0.62" stroke-linejoin="round" /><polyline points="270.2,113.6 281,117.1 290,120.7 297.9,120.7" fill="none" stroke="#f9dba4" stroke-width="0.62" stroke-linejoin="round" /><polyline points="330,99.3 325.2,101.7 319.3,108.8 303.8,114.8 297.9,120.7 286,124.3 284.8,130.2 281,135.6" fill="none" stroke="#f9dba4" stroke-width="0.62" stroke-linejoin="round" /><polyline points="351.4,100.5 357.4,108.8 353.8,118.3 346.7,124.3 339.5,126.7 334.8,130.2" fill="none" stroke="#f9dba4" stroke-width="0.62" stroke-linejoin="round" /><polyline points="237.6,153 248,150 258,146 268,141 276,137.6 281,135.6" fill="none" stroke="#f9dba4" stroke-width="0.62" stroke-linejoin="round" /><polyline points="281,135.6 290,139 300,141 310,138 320,136 328,133.4 334.4,131.5" fill="none" stroke="#f9dba4" stroke-width="0.62" stroke-linejoin="round" /><polyline points="334.4,131.5 336,140 338,148 339.4,154 340,164 341,172 341,180" fill="none" stroke="#f9dba4" stroke-width="0.62" stroke-linejoin="round" /><polyline points="228,93 230,100 232.1,108.2" fill="none" stroke="#f9dba4" stroke-width="0.62" stroke-linejoin="round" /><polyline points="233.3,110.6 236,126 238,136 238,146 237.6,153" fill="none" stroke="#f9dba4" stroke-width="0.62" stroke-linejoin="round" /><polyline points="201,150 212,152 224,153.6 237.6,153 241,156.9 245.7,164.5 255.3,166.4 276.2,166.4 282,157.9 299.1,163.6 302,165.5" fill="none" stroke="#f9dba4" stroke-width="0.62" stroke-linejoin="round" /><polyline points="255.3,166.4 246.7,174.1 241.9,181.7 232.4,186.4 222.9,193.1 211.4,201.7 201.9,208.4" fill="none" stroke="#f9dba4" stroke-width="0.62" stroke-linejoin="round" /><polyline points="222.9,193.1 238.1,195 240,202.6 243.8,206.5 270.5,200.7 272.4,191.2 275.3,179.8 302.9,173.1 318.2,174.1 325.8,177.9 341,180" fill="none" stroke="#f9dba4" stroke-width="0.62" stroke-linejoin="round" /><polyline points="243.8,206.5 230.5,219.8 228.6,233.7" fill="none" stroke="#f9dba4" stroke-width="0.62" stroke-linejoin="round" /><polyline points="243.8,206.5 269.6,215 283.9,208.4 302.9,198.8 322,191.2 333.4,185.5 341,180" fill="none" stroke="#f9dba4" stroke-width="0.62" stroke-linejoin="round" /><polyline points="269.6,215 283.9,217.9 306.7,217.9 318.2,229.3 321,233.7" fill="none" stroke="#f9dba4" stroke-width="0.62" stroke-linejoin="round" /><polyline points="302.9,198.8 312.4,210.3 318.2,229.3" fill="none" stroke="#f9dba4" stroke-width="0.62" stroke-linejoin="round" /><polyline points="341,180 339.1,193.1 333.4,212.2 322,225.5 318.2,229.3" fill="none" stroke="#f9dba4" stroke-width="0.62" stroke-linejoin="round" /><polyline points="306.7,165.5 322,162.6 333.4,160.7 340,157" fill="none" stroke="#f9dba4" stroke-width="0.62" stroke-linejoin="round" /><polyline points="322,162.6 323.9,174.1" fill="none" stroke="#f9dba4" stroke-width="0.62" stroke-linejoin="round" /><polyline points="301.8,165.5 304,156 310,148 318,142 326,137" fill="none" stroke="#f9dba4" stroke-width="0.62" stroke-linejoin="round" /><polyline points="373.6,97 380,104 384,112 386,120 390,126 396,129" fill="none" stroke="#f9dba4" stroke-width="0.62" stroke-linejoin="round" /><polyline points="351.4,100.5 360,99 372,96 384,93 396,91 408,89 420,86.6" fill="none" stroke="#f9dba4" stroke-width="0.62" stroke-linejoin="round" /><polyline points="386,120 396,118 408,118.6 415.2,126.9" fill="none" stroke="#f9dba4" stroke-width="0.62" stroke-linejoin="round" /><polyline points="435.3,90.7 447.6,98.3 449.6,109.8 445.7,123.1 444.8,132.6" fill="none" stroke="#f9dba4" stroke-width="0.62" stroke-linejoin="round" /><polyline points="419,93.6 414,106 409.5,117.4 415.2,126.9 430,128.8 445.7,129.8" fill="none" stroke="#f9dba4" stroke-width="0.62" stroke-linejoin="round" /><polyline points="415.2,126.9 419,140.3 411.4,149.8 409,158 407.6,165" fill="none" stroke="#f9dba4" stroke-width="0.62" stroke-linejoin="round" /><polyline points="444.8,132.6 436.2,142.2 438.1,151.7 442.9,156.5" fill="none" stroke="#f9dba4" stroke-width="0.62" stroke-linejoin="round" /><polyline points="445.7,129.8 462.9,128.8 476.2,132.6 483.9,139.3 498.2,135.5" fill="none" stroke="#f9dba4" stroke-width="0.62" stroke-linejoin="round" /><polyline points="498.2,135.5 514.4,132.6 525.8,126 533.4,117.4 544.6,115.5" fill="none" stroke="#f9dba4" stroke-width="0.62" stroke-linejoin="round" /><polyline points="498.2,135.5 502.9,144.1 499,147.9 483.9,150.7 477.2,160.3" fill="none" stroke="#f9dba4" stroke-width="0.62" stroke-linejoin="round" /><polyline points="442.9,156.5 462.9,150.7 483.9,150.7" fill="none" stroke="#f9dba4" stroke-width="0.62" stroke-linejoin="round" /><polyline points="533.4,126.9 541,134.6 543,142.2" fill="none" stroke="#f9dba4" stroke-width="0.62" stroke-linejoin="round" /><polyline points="502.9,144.1 518.2,147.9 533.4,147.9 544.6,150.5" fill="none" stroke="#f9dba4" stroke-width="0.62" stroke-linejoin="round" /><polyline points="442.9,156.9 438.1,164.5 432.4,172.2 435.3,178.8" fill="none" stroke="#f9dba4" stroke-width="0.62" stroke-linejoin="round" /><polyline points="435.3,178.8 457.2,179.8 461,191.2 465.8,203.6" fill="none" stroke="#f9dba4" stroke-width="0.62" stroke-linejoin="round" /><polyline points="477.2,160.7 482,168.3 499.1,176 508.6,183.6 504.8,196.9" fill="none" stroke="#f9dba4" stroke-width="0.62" stroke-linejoin="round" /><polyline points="465.8,203.6 485.8,200.7 504.8,196.9 518.2,189.3 529.6,179.8 544.6,174.1" fill="none" stroke="#f9dba4" stroke-width="0.62" stroke-linejoin="round" /><polyline points="371,203.7 384,207 400,212.2 419,214.1 433.4,212.2 453.4,207.4 465.8,203.6" fill="none" stroke="#f9dba4" stroke-width="0.62" stroke-linejoin="round" /><polyline points="341,180 350,187 360,195 371,203.7" fill="none" stroke="#f9dba4" stroke-width="0.62" stroke-linejoin="round" /><polyline points="419,172.2 417.2,193.1 419,214.1 424.8,233.7" fill="none" stroke="#f9dba4" stroke-width="0.62" stroke-linejoin="round" /><polyline points="407.6,181.7 417.2,193.1" fill="none" stroke="#f9dba4" stroke-width="0.62" stroke-linejoin="round" /><polyline points="433.4,212.2 428.6,223.6 419,233.7" fill="none" stroke="#f9dba4" stroke-width="0.62" stroke-linejoin="round" /><polyline points="504.8,196.9 493.4,210.3 495.3,221.7 493.4,233.7" fill="none" stroke="#f9dba4" stroke-width="0.62" stroke-linejoin="round" /><polyline points="504.8,196.9 522,204.5 533.4,210.3 544.6,212.2" fill="none" stroke="#f9dba4" stroke-width="0.62" stroke-linejoin="round" /><polyline points="399.8,214 398,222 396,233.7" fill="none" stroke="#f9dba4" stroke-width="0.62" stroke-linejoin="round" /><polyline points="435,178.8 424,180 412,181 401,180 392,178" fill="none" stroke="#f9dba4" stroke-width="0.62" stroke-linejoin="round" /><polyline points="356,233.7 366,226 376,218 384,207" fill="none" stroke="#f9dba4" stroke-width="0.62" stroke-linejoin="round" /><polygon points="295.5,86.2 300,85.8 306.2,87 305,90.6 300,91.5 296,89.6" fill="#aac6f2"/><polygon points="325,91.6 330,91 336,93.6 334,97 329,96.4 326,94.6" fill="#aac6f2"/><polyline points="247.6,104.6 253.6,102.3 264.3,101.7 263.1,108.8 261.9,111.2" fill="none" stroke="#8fb5ee" stroke-width="0.6" stroke-linejoin="round" /><polyline points="341,180 337.2,190 338.2,202.6 342,212.2 333.4,219.8 322,225.5 312.4,231.2" fill="none" stroke="#c4d8f6" stroke-width="0.8" stroke-linejoin="round" /><polygon points="221,158 224,157 225.7,160 223,162.6" fill="#aac6f2"/><polygon points="278,190 283,189 284,192 279.4,193" fill="#aac6f2"/></g></svg>
<div style="left:467.44px;top:198.84px;width:799.07px;height:344.65px;overflow:hidden;">
<div class="t" style="left:82.56px;top:44.09px;font-size:11px;line-height:16px;color:#8e5230;font-weight:normal;text-shadow:0 0 2px #fff,0 0 2px #fff;">通山县</div>
<div class="t" style="left:166.28px;top:3.63px;font-size:11px;line-height:16px;color:#8e5230;font-weight:normal;text-shadow:0 0 2px #fff,0 0 2px #fff;">阳新县</div>
<div class="t" style="left:367.44px;top:73.86px;font-size:11px;line-height:16px;color:#8e5230;font-weight:normal;text-shadow:0 0 2px #fff,0 0 2px #fff;">庐山市</div>
<div class="t" style="left:145.35px;top:109.44px;font-size:11px;line-height:16px;color:#8e5230;font-weight:normal;text-shadow:0 0 2px #fff,0 0 2px #fff;">武宁县</div>
<div class="t" style="left:318.14px;top:100.14px;font-size:11px;line-height:16px;color:#8e5230;font-weight:normal;text-shadow:0 0 2px #fff,0 0 2px #fff;">德安县</div>
<div class="t" style="left:397.67px;top:104.79px;font-size:11px;line-height:16px;color:#8e5230;font-weight:normal;text-shadow:0 0 2px #fff,0 0 2px #fff;">都昌县</div>
<div class="t" style="left:93.02px;top:150.37px;font-size:11px;line-height:16px;color:#8e5230;font-weight:normal;text-shadow:0 0 2px #fff,0 0 2px #fff;">修水县</div>
<div class="t" style="left:329.53px;top:152.47px;font-size:11px;line-height:16px;color:#8e5230;font-weight:normal;text-shadow:0 0 2px #fff,0 0 2px #fff;">永修县</div>
<div class="t" style="left:674.42px;top:-1.49px;font-size:11px;line-height:16px;color:#8e5230;font-weight:normal;text-shadow:0 0 2px #fff,0 0 2px #fff;">祁门县</div>
<div class="t" style="left:699.3px;top:109.44px;font-size:11px;line-height:16px;color:#8e5230;font-weight:normal;text-shadow:0 0 2px #fff,0 0 2px #fff;">婺源县</div>
<div class="t" style="left:570.47px;top:157.58px;font-size:11px;line-height:16px;color:#8e5230;font-weight:normal;text-shadow:0 0 2px #fff,0 0 2px #fff;">乐平市</div>
<div class="t" style="left:651.63px;top:167.12px;font-size:11px;line-height:16px;color:#8e5230;font-weight:normal;text-shadow:0 0 2px #fff,0 0 2px #fff;">德兴市</div>
<div class="t" style="left:243.26px;top:180.60px;font-size:11px;line-height:16px;color:#8e5230;font-weight:normal;text-shadow:0 0 2px #fff,0 0 2px #fff;">靖安县</div>
<div class="t" style="left:251.16px;top:211.53px;font-size:11px;line-height:16px;color:#8e5230;font-weight:normal;text-shadow:0 0 2px #fff,0 0 2px #fff;">奉新县</div>
<div class="t" style="left:59.07px;top:243.86px;font-size:11px;line-height:16px;color:#8e5230;font-weight:normal;text-shadow:0 0 2px #fff,0 0 2px #fff;">铜鼓县</div>
<div class="t" style="left:244.88px;top:255.49px;font-size:11px;line-height:16px;color:#8e5230;font-weight:normal;text-shadow:0 0 2px #fff,0 0 2px #fff;">高安市</div>
<div class="t" style="left:167.91px;top:294.56px;font-size:11px;line-height:16px;color:#8e5230;font-weight:normal;text-shadow:0 0 2px #fff,0 0 2px #fff;">上高县</div>
<div class="t" style="left:277.21px;top:327.12px;font-size:11px;line-height:16px;color:#8e5230;font-weight:normal;text-shadow:0 0 2px #fff,0 0 2px #fff;">樟树市</div>
<div class="t" style="left:552.33px;top:210.84px;font-size:11px;line-height:16px;color:#8e5230;font-weight:normal;text-shadow:0 0 2px #fff,0 0 2px #fff;">万年县</div>
<div class="t" style="left:770.93px;top:211.77px;font-size:11px;line-height:16px;color:#8e5230;font-weight:normal;text-shadow:0 0 2px #fff,0 0 2px #fff;">玉山县</div>
<div class="t" style="left:625.58px;top:268.05px;font-size:11px;line-height:16px;color:#8e5230;font-weight:normal;text-shadow:0 0 2px #fff,0 0 2px #fff;">弋阳县</div>
<div class="t" style="left:403.72px;top:268.98px;font-size:11px;line-height:16px;color:#8e5230;font-weight:normal;text-shadow:0 0 2px #fff,0 0 2px #fff;">进贤县</div>
<div class="t" style="left:446.51px;top:305.02px;font-size:11px;line-height:16px;color:#8e5230;font-weight:normal;text-shadow:0 0 2px #fff,0 0 2px #fff;">东乡区</div>
<div class="t" style="left:415.12px;top:-6.14px;font-size:11px;line-height:16px;color:#8e5230;font-weight:normal;text-shadow:0 0 2px #fff,0 0 2px #fff;">彭泽县</div>
<div class="t" style="left:354.65px;top:34.56px;font-size:12.5px;line-height:16px;color:#111;font-weight:500;text-shadow:0 0 2px #fff,0 0 2px #fff;">九江市</div>
<div class="t" style="left:577.44px;top:105.26px;font-size:12.5px;line-height:16px;color:#111;font-weight:500;text-shadow:0 0 2px #fff,0 0 2px #fff;">景德镇市</div>
<div class="t" style="left:333.72px;top:211.77px;font-size:14px;line-height:16px;color:#111;font-weight:bold;text-shadow:0 0 2px #fff,0 0 2px #fff;">南昌市</div>
<div class="t" style="left:716.98px;top:253.63px;font-size:12.5px;line-height:16px;color:#111;font-weight:500;text-shadow:0 0 2px #fff,0 0 2px #fff;">上饶市</div>
<div class="t" style="left:551.16px;top:288.28px;font-size:12.5px;line-height:16px;color:#111;font-weight:500;text-shadow:0 0 2px #fff,0 0 2px #fff;">鹰潭市</div>
<div class="t" style="left:27.67px;top:16.42px;font-size:12.5px;line-height:16px;color:#111;font-weight:500;text-shadow:0 0 2px #fff,0 0 2px #fff;">咸宁市</div>
<div class="t" style="left:789.77px;top:24.33px;font-size:12px;line-height:16px;color:#333;font-weight:normal;text-shadow:0 0 2px #fff,0 0 2px #fff;">徽</div>
<div class="t" style="left:385.12px;top:139.91px;font-size:10.2px;line-height:16px;color:#2f78cf;font-weight:normal;text-shadow:0 0 2px #fff,0 0 2px #fff;letter-spacing:1.9px;text-shadow:0 0 2px #fff,0 0 2px #fff,0 0 3px #fff,0 0 3px #fff;">鄱阳湖</div>
<div class="t" style="left:286.98px;top:0.84px;font-size:11.5px;line-height:16px;color:#2583b5;font-weight:500;text-shadow:0 0 2px #fff,0 0 2px #fff;font-style:italic;text-shadow:0 0 2px #fff,0 0 2px #fff,0 0 3px #fff,0 0 3px #fff,0 0 4px #fff;">长</div>
<div class="t" style="left:300.47px;top:10.84px;font-size:11.5px;line-height:16px;color:#2583b5;font-weight:500;text-shadow:0 0 2px #fff,0 0 2px #fff;font-style:italic;text-shadow:0 0 2px #fff,0 0 2px #fff,0 0 3px #fff,0 0 3px #fff,0 0 4px #fff;">江</div>
<svg style="left:0;top:0;" width="799.07" height="344.65" viewBox="201 85.5 343.6 148.2"><circle cx="233.1" cy="107.4" r="0.78" fill="#fff" stroke="#555" stroke-width="0.4"/><circle cx="290.5" cy="89.9" r="0.78" fill="#fff" stroke="#555" stroke-width="0.4"/><circle cx="356.2" cy="120.3" r="0.78" fill="#fff" stroke="#555" stroke-width="0.4"/><circle cx="280.8" cy="135.6" r="0.78" fill="#fff" stroke="#555" stroke-width="0.4"/><circle cx="334.4" cy="131.5" r="0.78" fill="#fff" stroke="#555" stroke-width="0.4"/><circle cx="367.9" cy="133.3" r="0.78" fill="#fff" stroke="#555" stroke-width="0.4"/><circle cx="237.6" cy="152.9" r="0.78" fill="#fff" stroke="#555" stroke-width="0.4"/><circle cx="339.3" cy="154" r="0.78" fill="#fff" stroke="#555" stroke-width="0.4"/><circle cx="487.5" cy="88" r="0.78" fill="#fff" stroke="#555" stroke-width="0.4"/><circle cx="498.3" cy="135.6" r="0.78" fill="#fff" stroke="#555" stroke-width="0.4"/><circle cx="442.5" cy="155.8" r="0.78" fill="#fff" stroke="#555" stroke-width="0.4"/><circle cx="477.8" cy="160" r="0.78" fill="#fff" stroke="#555" stroke-width="0.4"/><circle cx="301.8" cy="165.5" r="0.78" fill="#fff" stroke="#555" stroke-width="0.4"/><circle cx="305.1" cy="179.2" r="0.78" fill="#fff" stroke="#555" stroke-width="0.4"/><circle cx="223" cy="193.1" r="0.78" fill="#fff" stroke="#555" stroke-width="0.4"/><circle cx="302.9" cy="198.1" r="0.78" fill="#fff" stroke="#555" stroke-width="0.4"/><circle cx="269.6" cy="215" r="0.78" fill="#fff" stroke="#555" stroke-width="0.4"/><circle cx="316.4" cy="228.7" r="0.78" fill="#fff" stroke="#555" stroke-width="0.4"/><circle cx="435.1" cy="178.7" r="0.78" fill="#fff" stroke="#555" stroke-width="0.4"/><circle cx="528.5" cy="179.2" r="0.78" fill="#fff" stroke="#555" stroke-width="0.4"/><circle cx="466.1" cy="203.3" r="0.78" fill="#fff" stroke="#555" stroke-width="0.4"/><circle cx="371" cy="203.7" r="0.78" fill="#fff" stroke="#555" stroke-width="0.4"/><circle cx="399.8" cy="214" r="0.78" fill="#fff" stroke="#555" stroke-width="0.4"/><circle cx="379" cy="85.6" r="0.78" fill="#fff" stroke="#555" stroke-width="0.4"/><circle cx="349" cy="103.4" r="1.05" fill="#fff" stroke="#333" stroke-width="0.42"/><circle cx="445.2" cy="133.3" r="1.05" fill="#fff" stroke="#333" stroke-width="0.42"/><circle cx="341.1" cy="179.6" r="1.05" fill="#fff" stroke="#333" stroke-width="0.42"/><circle cx="504.8" cy="197.2" r="1.05" fill="#fff" stroke="#333" stroke-width="0.42"/><circle cx="433.5" cy="212.3" r="1.05" fill="#fff" stroke="#333" stroke-width="0.42"/><circle cx="220.3" cy="88.8" r="1.05" fill="#fff" stroke="#333" stroke-width="0.42"/></svg>
<div class="t" style="left:5.58px;top:322.93px;font-size:19px;line-height:16px;color:#f39a1e;font-weight:bold;text-shadow:0 0 2px #fff,0 0 2px #fff;font-family:'Noto Serif CJK SC',serif;font-style:italic;letter-spacing:-2.4px;">天地图</div>
<div class="t" style="left:63.26px;top:319.44px;font-size:10.9px;line-height:16px;color:#333;font-weight:normal;text-shadow:0 0 2px #fff,0 0 2px #fff;">GS (2025) 1508号 - 甲测资字11110974</div>
<div style="left:705.81px;top:11.63px;width:80.7px;height:80.23px;border-radius:4px;overflow:hidden;box-shadow:0 0 5px rgba(0,0,0,.55);background:#4f6238;"><svg style="left:0;top:0;" width="80.7" height="80.23" viewBox="0 0 34.7 34.5"><defs><filter id="bl" x="-20%" y="-20%" width="140%" height="140%"><feGaussianBlur stdDeviation="1.3"/></filter><filter id="bl2" x="-20%" y="-20%" width="140%" height="140%"><feGaussianBlur stdDeviation="0.6"/></filter></defs><rect width="34.7" height="34.5" fill="#4f5f3b"/><g filter="url(#bl)"><path d="M-3 -3 H27 L22 4 L15 9 L8 12 L2 16 L-3 18 Z" fill="#9a917b"/><path d="M-3 -3 H16 L10 5 L2 9 L-3 10 Z" fill="#a89f88"/><path d="M16 -3 H30 L26 4 L20 7 Z" fill="#8a8468"/><path d="M-3 18 L6 14 L16 11 L24 12 L26 20 L22 27 L12 30 L-3 28 Z" fill="#4a6138"/><path d="M-3 24 L4 22 L10 26 L8 38 H-3 Z" fill="#586f45"/><path d="M26 2 L38 -3 V9 L33 8 L29 7 Z" fill="#46583a"/></g><g filter="url(#bl2)"><path d="M27 9.5 L29.5 8 L33.5 9 L35 7.5 L38 8 V38 H20 L22.5 27 L25.5 21.5 L28 18 L27 15 L28.2 13 L26 11.5 Z" fill="#121c2a"/><path d="M26.2 10 L29.5 8 L31 10 L28.4 12.6 Z" fill="#1d3a3a"/></g></svg><div style="left:0;bottom:0;width:100%;height:20.93px;background:rgba(205,205,222,.72);"></div><div class="t" style="left:0;width:100%;text-align:center;bottom:1.63px;font-size:12px;line-height:18.6px;color:#222;">卫星</div></div>
<svg style="left:0;top:0;" width="799.07" height="344.65" viewBox="201 85.5 343.6 148.2"><path d="M373.4 165.8 C371.6 162.4 369.2 160.2 369.2 157.4 C369.2 155.1 371.1 153.3 373.4 153.3 C375.7 153.3 377.6 155.1 377.6 157.4 C377.6 160.2 375.2 162.4 373.4 165.8 Z" fill="#1fa587"/><circle cx="373.4" cy="157.3" r="2.6" fill="none" stroke="#d8f3ea" stroke-width="0.5"/><path d="M371.9 156.4 H374.9 M373.4 155.4 V159.2 M372.2 158 H374.6" stroke="#d8f3ea" stroke-width="0.5" fill="none"/></svg>
<div style="left:400.23px;top:190px;width:132.56px;height:26.51px;background:#3ea66a;"></div>
<div class="t" style="left:409.77px;top:192.26px;font-size:16.3px;line-height:22px;color:#fff;">水雨情监测系统</div>
</div>
<div style="left:1150.93px;top:176.98px;width:12.09px;height:13.02px;background:#1a73e8;border-radius:2px;"></div>
<svg style="left:1150.93px;top:176.98px;" width="12.09" height="13.02" viewBox="494.9 76.1 5.2000000000000455 5.6000000000000085"><path d="M496 79 L497.3 80.3 L499.2 77.6" fill="none" stroke="#fff" stroke-width="0.85"/></svg>
<div class="t" style="left:1168.6px;top:174.65px;font-size:14.3px;line-height:20px;color:#333;font-weight:normal;">设备名称</div>
<div style="left:1233.72px;top:172.09px;width:26.28px;height:23.49px;border:1px solid #ddd;border-radius:4px;background:#fff;"></div>
<svg style="left:1233.72px;top:172.09px;" width="26.28" height="23.49" viewBox="530.5 74 11.299999999999955 10.099999999999994"><rect x="533.2" y="76.4" width="6" height="5.6" fill="#f0f0f0" stroke="#888" stroke-width="0.45"/><path d="M533.2 77.4 H539.2" stroke="#444" stroke-width="0.9" stroke-dasharray="1.3 0.9"/><path d="M535.2 78 V82 M533.2 79.8 H539.2" stroke="#aaa" stroke-width="0.35"/></svg>
<div class="t" style="left:1291.16px;top:208.37px;font-size:14.2px;line-height:20px;color:#222;font-weight:bold;">设备名称:</div>
<div class="t" style="left:1365.58px;top:208.37px;font-size:14.2px;line-height:20px;color:#333;font-weight:normal;">水雨情监测系统</div>
<div class="t" style="left:1291.16px;top:240.23px;font-size:14.2px;line-height:20px;color:#222;font-weight:bold;">设备地址:</div>
<div class="t" style="left:1365.58px;top:240.23px;font-size:14.2px;line-height:20px;color:#333;font-weight:normal;">24220699</div>
<div class="t" style="left:1291.16px;top:272.33px;font-size:14.2px;line-height:20px;color:#222;font-weight:bold;">所属区域:</div>
<div class="t" style="left:1365.58px;top:272.33px;font-size:14.2px;line-height:20px;color:#333;font-weight:normal;">展厅在线演示设备（勿动）</div>
<div class="t" style="left:1291.16px;top:304.42px;font-size:14.2px;line-height:20px;color:#222;font-weight:bold;">报警功能:</div>
<div class="t" style="left:1365.58px;top:304.42px;font-size:14.2px;line-height:20px;color:#333;font-weight:normal;">开</div>
<div class="t" style="left:1291.16px;top:336.51px;font-size:14.2px;line-height:20px;color:#222;font-weight:bold;">报警类型:</div>
<div class="t" style="left:1365.58px;top:336.51px;font-size:14.2px;line-height:20px;color:#333;font-weight:normal;">离线报警、超限报警</div>
<div class="t" style="left:1291.16px;top:368.37px;font-size:14.2px;line-height:20px;color:#222;font-weight:bold;">标记位置:</div>
<div class="t" style="left:1365.58px;top:368.37px;font-size:14.2px;line-height:20px;color:#333;font-weight:normal;">开启</div>
<div class="t" style="left:1291.16px;top:401.63px;font-size:14.2px;line-height:20px;color:#222;font-weight:bold;">离线判断间隔:</div>
<div class="t" style="left:1393.72px;top:401.63px;font-size:14.2px;line-height:20px;color:#333;font-weight:normal;">9999分钟</div>
<div class="t" style="left:1291.16px;top:433.26px;font-size:14.2px;line-height:20px;color:#222;font-weight:bold;">保存数据间隔:</div>
<div class="t" style="left:1393.72px;top:433.26px;font-size:14.2px;line-height:20px;color:#333;font-weight:normal;">1分钟</div>
<div class="t" style="left:1300.93px;top:465.12px;font-size:14.2px;line-height:20px;color:#333;font-weight:normal;">摄像头信息</div>
<div style="left:1290.7px;top:490.7px;width:552.33px;height:1.16px;background:#ddd;"></div>
<div class="t" style="left:1566.28px;transform:translateX(-50%);top:508.84px;font-size:14.2px;line-height:20px;color:#333;font-weight:normal;">暂无摄像头信息</div>
<div style="left:1791.86px;top:170.23px;width:24.88px;height:23.26px;border:1px solid #ddd;border-radius:3px;background:#fff;"></div>
<div style="left:1820.47px;top:170.23px;width:24.19px;height:23.26px;border:1px solid #ddd;border-radius:3px;background:#fff;"></div>
<svg style="left:1779.07px;top:162.79px;" width="81.4" height="41.86" viewBox="765 70 35 18"><circle cx="774.7" cy="78.7" r="1.6" fill="none" stroke="#333" stroke-width="0.9"/><circle cx="778.2" cy="76.6" r="0.8" fill="#333"/><circle cx="778.2" cy="80.8" r="0.8" fill="#333"/><path d="M776.2 78 L778 76.8 M776.2 79.4 L778 80.6" stroke="#333" stroke-width="0.5"/><rect x="784.8" y="76.2" width="6.4" height="4.8" fill="#777" stroke="#555" stroke-width="0.4"/><path d="M786 77.6 H790 M786 79.4 H790" stroke="#ddd" stroke-width="0.6" stroke-dasharray="0.8 0.5"/></svg>
<div style="left:211.4px;top:592.56px;width:1636.51px;height:370px;overflow:hidden;"><svg style="left:0;top:0;overflow:hidden;" width="1636.51" height="370" viewBox="90.9 254.8 703.7 159.09999999999997"><clipPath id="ct"><rect x="90.9" y="256.8" width="703.7" height="200"/></clipPath><g clip-path="url(#ct)"><path d="M117.2 259.20 H251.4" stroke="#c8c8c8" stroke-width="0.45"/><path d="M117.2 272.20 H251.4" stroke="#c8c8c8" stroke-width="0.45"/><path d="M117.2 285.20 H251.4" stroke="#c8c8c8" stroke-width="0.45"/><path d="M156.20 257.2 V298.3" stroke="#c8c8c8" stroke-width="0.45"/><path d="M196.30 257.2 V298.3" stroke="#c8c8c8" stroke-width="0.45"/><path d="M237.20 257.2 V298.3" stroke="#c8c8c8" stroke-width="0.45"/><path d="M251.4 257.2 V298.3" stroke="#c8c8c8" stroke-width="0.45"/><path d="M117.2 257.2 V298.3 H251.4" stroke="#555" stroke-width="0.75" fill="none"/><path d="M115.0 259.20 H117.2" stroke="#555" stroke-width="0.5"/><text transform="translate(113.80 259.20) scale(0.43)" x="0" y="0" font-size="12.67" text-anchor="end" fill="#333" font-weight="normal" dominant-baseline="central">1.5</text><path d="M115.0 272.20 H117.2" stroke="#555" stroke-width="0.5"/><text transform="translate(113.80 272.20) scale(0.43)" x="0" y="0" font-size="12.67" text-anchor="end" fill="#333" font-weight="normal" dominant-baseline="central">1</text><path d="M115.0 285.20 H117.2" stroke="#555" stroke-width="0.5"/><text transform="translate(113.80 285.20) scale(0.43)" x="0" y="0" font-size="12.67" text-anchor="end" fill="#333" font-weight="normal" dominant-baseline="central">0.5</text><path d="M115.0 298.30 H117.2" stroke="#555" stroke-width="0.5"/><text transform="translate(113.80 298.30) scale(0.43)" x="0" y="0" font-size="12.67" text-anchor="end" fill="#333" font-weight="normal" dominant-baseline="central">0</text><path d="M156.20 298.3 V299.90000000000003" stroke="#555" stroke-width="0.5"/><path d="M196.30 298.3 V299.90000000000003" stroke="#555" stroke-width="0.5"/><path d="M237.20 298.3 V299.90000000000003" stroke="#555" stroke-width="0.5"/><polyline points="117.20,298.30 153.00,298.30 157.00,257.00" fill="none" stroke="#6f992c" stroke-width="0.95" stroke-linejoin="round"/><circle cx="117.20" cy="298.30" r="0.95" fill="#fff" stroke="#6f992c" stroke-width="0.45"/><circle cx="121.18" cy="298.30" r="0.95" fill="#fff" stroke="#6f992c" stroke-width="0.45"/><circle cx="125.16" cy="298.30" r="0.95" fill="#fff" stroke="#6f992c" stroke-width="0.45"/><circle cx="129.13" cy="298.30" r="0.95" fill="#fff" stroke="#6f992c" stroke-width="0.45"/><circle cx="133.11" cy="298.30" r="0.95" fill="#fff" stroke="#6f992c" stroke-width="0.45"/><circle cx="137.09" cy="298.30" r="0.95" fill="#fff" stroke="#6f992c" stroke-width="0.45"/><circle cx="141.07" cy="298.30" r="0.95" fill="#fff" stroke="#6f992c" stroke-width="0.45"/><circle cx="145.04" cy="298.30" r="0.95" fill="#fff" stroke="#6f992c" stroke-width="0.45"/><circle cx="149.02" cy="298.30" r="0.95" fill="#fff" stroke="#6f992c" stroke-width="0.45"/><circle cx="153.00" cy="298.30" r="0.95" fill="#fff" stroke="#6f992c" stroke-width="0.45"/><text transform="translate(117.20 303.70) scale(0.43)" x="0" y="0" font-size="12.67" text-anchor="middle" fill="#333" font-weight="normal" dominant-baseline="central">15:40:21</text><text transform="translate(117.20 308.80) scale(0.43)" x="0" y="0" font-size="12.67" text-anchor="middle" fill="#333" font-weight="normal" dominant-baseline="central">2025-06-05</text><text transform="translate(156.20 303.70) scale(0.43)" x="0" y="0" font-size="12.67" text-anchor="middle" fill="#333" font-weight="normal" dominant-baseline="central">15:50:00</text><text transform="translate(156.20 308.80) scale(0.43)" x="0" y="0" font-size="12.67" text-anchor="middle" fill="#333" font-weight="normal" dominant-baseline="central">2025-06-05</text><text transform="translate(196.30 303.70) scale(0.43)" x="0" y="0" font-size="12.67" text-anchor="middle" fill="#333" font-weight="normal" dominant-baseline="central">16:00:00</text><text transform="translate(196.30 308.80) scale(0.43)" x="0" y="0" font-size="12.67" text-anchor="middle" fill="#333" font-weight="normal" dominant-baseline="central">2025-06-05</text><text transform="translate(237.20 303.70) scale(0.43)" x="0" y="0" font-size="12.67" text-anchor="middle" fill="#333" font-weight="normal" dominant-baseline="central">16:10:00</text><text transform="translate(237.20 308.80) scale(0.43)" x="0" y="0" font-size="12.67" text-anchor="middle" fill="#333" font-weight="normal" dominant-baseline="central">2025-06-05</text><rect x="117.6" y="308.4" width="135.4" height="12.400000000000034" fill="#cdd6e4" fill-opacity="0.78"/><path d="M117.6 319.8 L150.6 319.2 L155.6 311.4 L253 311.4 V320.8 H117.6 Z" fill="#bccadd" fill-opacity="0.55"/><path d="M117.6 308.4 V320.8" stroke="#9fb4d2" stroke-width="0.5"/><rect x="116.69999999999999" y="312.20000000000005" width="1.8" height="4.8" rx="0.5" fill="#c4d3ea" stroke="#7f9cc6" stroke-width="0.4"/><path d="M253 308.4 V320.8" stroke="#9fb4d2" stroke-width="0.5"/><rect x="252.1" y="312.20000000000005" width="1.8" height="4.8" rx="0.5" fill="#c4d3ea" stroke="#7f9cc6" stroke-width="0.4"/><path d="M298.7 264.10 H433" stroke="#c8c8c8" stroke-width="0.45"/><path d="M298.7 272.60 H433" stroke="#c8c8c8" stroke-width="0.45"/><path d="M298.7 281.20 H433" stroke="#c8c8c8" stroke-width="0.45"/><path d="M298.7 289.70 H433" stroke="#c8c8c8" stroke-width="0.45"/><path d="M337.60 257.2 V298.3" stroke="#c8c8c8" stroke-width="0.45"/><path d="M378.00 257.2 V298.3" stroke="#c8c8c8" stroke-width="0.45"/><path d="M418.60 257.2 V298.3" stroke="#c8c8c8" stroke-width="0.45"/><path d="M433 257.2 V298.3" stroke="#c8c8c8" stroke-width="0.45"/><path d="M371.8 257.2 V298.3" stroke="#999" stroke-width="0.55"/><path d="M298.7 257.2 V298.3 H433" stroke="#555" stroke-width="0.75" fill="none"/><path d="M296.5 264.10 H298.7" stroke="#555" stroke-width="0.5"/><text transform="translate(295.30 264.10) scale(0.43)" x="0" y="0" font-size="12.67" text-anchor="end" fill="#333" font-weight="normal" dominant-baseline="central">2</text><path d="M296.5 272.60 H298.7" stroke="#555" stroke-width="0.5"/><text transform="translate(295.30 272.60) scale(0.43)" x="0" y="0" font-size="12.67" text-anchor="end" fill="#333" font-weight="normal" dominant-baseline="central">1.5</text><path d="M296.5 281.20 H298.7" stroke="#555" stroke-width="0.5"/><text transform="translate(295.30 281.20) scale(0.43)" x="0" y="0" font-size="12.67" text-anchor="end" fill="#333" font-weight="normal" dominant-baseline="central">1</text><path d="M296.5 289.70 H298.7" stroke="#555" stroke-width="0.5"/><text transform="translate(295.30 289.70) scale(0.43)" x="0" y="0" font-size="12.67" text-anchor="end" fill="#333" font-weight="normal" dominant-baseline="central">0.5</text><path d="M296.5 298.30 H298.7" stroke="#555" stroke-width="0.5"/><text transform="translate(295.30 298.30) scale(0.43)" x="0" y="0" font-size="12.67" text-anchor="end" fill="#333" font-weight="normal" dominant-baseline="central">0</text><path d="M337.60 298.3 V299.90000000000003" stroke="#555" stroke-width="0.5"/><path d="M378.00 298.3 V299.90000000000003" stroke="#555" stroke-width="0.5"/><path d="M418.60 298.3 V299.90000000000003" stroke="#555" stroke-width="0.5"/><polyline points="298.70,298.30 334.60,298.30 338.40,257.00" fill="none" stroke="#6f992c" stroke-width="0.95" stroke-linejoin="round"/><circle cx="298.70" cy="298.30" r="0.95" fill="#fff" stroke="#6f992c" stroke-width="0.45"/><circle cx="302.69" cy="298.30" r="0.95" fill="#fff" stroke="#6f992c" stroke-width="0.45"/><circle cx="306.68" cy="298.30" r="0.95" fill="#fff" stroke="#6f992c" stroke-width="0.45"/><circle cx="310.67" cy="298.30" r="0.95" fill="#fff" stroke="#6f992c" stroke-width="0.45"/><circle cx="314.66" cy="298.30" r="0.95" fill="#fff" stroke="#6f992c" stroke-width="0.45"/><circle cx="318.64" cy="298.30" r="0.95" fill="#fff" stroke="#6f992c" stroke-width="0.45"/><circle cx="322.63" cy="298.30" r="0.95" fill="#fff" stroke="#6f992c" stroke-width="0.45"/><circle cx="326.62" cy="298.30" r="0.95" fill="#fff" stroke="#6f992c" stroke-width="0.45"/><circle cx="330.61" cy="298.30" r="0.95" fill="#fff" stroke="#6f992c" stroke-width="0.45"/><circle cx="334.60" cy="298.30" r="0.95" fill="#fff" stroke="#6f992c" stroke-width="0.45"/><text transform="translate(298.70 303.70) scale(0.43)" x="0" y="0" font-size="12.67" text-anchor="middle" fill="#333" font-weight="normal" dominant-baseline="central">15:40:21</text><text transform="translate(298.70 308.80) scale(0.43)" x="0" y="0" font-size="12.67" text-anchor="middle" fill="#333" font-weight="normal" dominant-baseline="central">2025-06-05</text><text transform="translate(337.60 303.70) scale(0.43)" x="0" y="0" font-size="12.67" text-anchor="middle" fill="#333" font-weight="normal" dominant-baseline="central">15:50:00</text><text transform="translate(337.60 308.80) scale(0.43)" x="0" y="0" font-size="12.67" text-anchor="middle" fill="#333" font-weight="normal" dominant-baseline="central">2025-06-05</text><text transform="translate(378.00 303.70) scale(0.43)" x="0" y="0" font-size="12.67" text-anchor="middle" fill="#333" font-weight="normal" dominant-baseline="central">16:00:00</text><text transform="translate(378.00 308.80) scale(0.43)" x="0" y="0" font-size="12.67" text-anchor="middle" fill="#333" font-weight="normal" dominant-baseline="central">2025-06-05</text><text transform="translate(418.60 303.70) scale(0.43)" x="0" y="0" font-size="12.67" text-anchor="middle" fill="#333" font-weight="normal" dominant-baseline="central">16:10:00</text><text transform="translate(418.60 308.80) scale(0.43)" x="0" y="0" font-size="12.67" text-anchor="middle" fill="#333" font-weight="normal" dominant-baseline="central">2025-06-05</text><rect x="299" y="308.4" width="135" height="12.400000000000034" fill="#cdd6e4" fill-opacity="0.78"/><path d="M299 319.8 L332 319.2 L337 311.4 L434 311.4 V320.8 H299 Z" fill="#bccadd" fill-opacity="0.55"/><path d="M299 308.4 V320.8" stroke="#9fb4d2" stroke-width="0.5"/><rect x="298.1" y="312.20000000000005" width="1.8" height="4.8" rx="0.5" fill="#c4d3ea" stroke="#7f9cc6" stroke-width="0.4"/><path d="M434 308.4 V320.8" stroke="#9fb4d2" stroke-width="0.5"/><rect x="433.1" y="312.20000000000005" width="1.8" height="4.8" rx="0.5" fill="#c4d3ea" stroke="#7f9cc6" stroke-width="0.4"/><path d="M479.4 267.00 H613.7" stroke="#c8c8c8" stroke-width="0.45"/><path d="M479.4 277.50 H613.7" stroke="#c8c8c8" stroke-width="0.45"/><path d="M479.4 287.90 H613.7" stroke="#c8c8c8" stroke-width="0.45"/><path d="M497.80 257.2 V298.3" stroke="#c8c8c8" stroke-width="0.45"/><path d="M547.30 257.2 V298.3" stroke="#c8c8c8" stroke-width="0.45"/><path d="M596.30 257.2 V298.3" stroke="#c8c8c8" stroke-width="0.45"/><path d="M613.7 257.2 V298.3" stroke="#c8c8c8" stroke-width="0.45"/><path d="M479.4 257.2 V298.3 H613.7" stroke="#555" stroke-width="0.75" fill="none"/><path d="M477.2 256.60 H479.4" stroke="#555" stroke-width="0.5"/><text transform="translate(476.00 256.60) scale(0.43)" x="0" y="0" font-size="12.67" text-anchor="end" fill="#333" font-weight="normal" dominant-baseline="central">120</text><path d="M477.2 267.00 H479.4" stroke="#555" stroke-width="0.5"/><text transform="translate(476.00 267.00) scale(0.43)" x="0" y="0" font-size="12.67" text-anchor="end" fill="#333" font-weight="normal" dominant-baseline="central">90</text><path d="M477.2 277.50 H479.4" stroke="#555" stroke-width="0.5"/><text transform="translate(476.00 277.50) scale(0.43)" x="0" y="0" font-size="12.67" text-anchor="end" fill="#333" font-weight="normal" dominant-baseline="central">60</text><path d="M477.2 287.90 H479.4" stroke="#555" stroke-width="0.5"/><text transform="translate(476.00 287.90) scale(0.43)" x="0" y="0" font-size="12.67" text-anchor="end" fill="#333" font-weight="normal" dominant-baseline="central">30</text><path d="M477.2 298.30 H479.4" stroke="#555" stroke-width="0.5"/><text transform="translate(476.00 298.30) scale(0.43)" x="0" y="0" font-size="12.67" text-anchor="end" fill="#333" font-weight="normal" dominant-baseline="central">0</text><path d="M497.80 298.3 V299.90000000000003" stroke="#555" stroke-width="0.5"/><path d="M547.30 298.3 V299.90000000000003" stroke="#555" stroke-width="0.5"/><path d="M596.30 298.3 V299.90000000000003" stroke="#555" stroke-width="0.5"/><polyline points="479.40,298.30 494.40,298.30 499.30,262.60 524.30,262.60 528.20,256.50" fill="none" stroke="#6f992c" stroke-width="0.95" stroke-linejoin="round"/><circle cx="479.40" cy="298.30" r="0.95" fill="#fff" stroke="#6f992c" stroke-width="0.45"/><circle cx="484.40" cy="298.30" r="0.95" fill="#fff" stroke="#6f992c" stroke-width="0.45"/><circle cx="489.40" cy="298.30" r="0.95" fill="#fff" stroke="#6f992c" stroke-width="0.45"/><circle cx="494.40" cy="298.30" r="0.95" fill="#fff" stroke="#6f992c" stroke-width="0.45"/><circle cx="499.30" cy="262.60" r="0.95" fill="#fff" stroke="#6f992c" stroke-width="0.45"/><circle cx="504.30" cy="262.60" r="0.95" fill="#fff" stroke="#6f992c" stroke-width="0.45"/><circle cx="509.30" cy="262.60" r="0.95" fill="#fff" stroke="#6f992c" stroke-width="0.45"/><circle cx="514.30" cy="262.60" r="0.95" fill="#fff" stroke="#6f992c" stroke-width="0.45"/><circle cx="519.30" cy="262.60" r="0.95" fill="#fff" stroke="#6f992c" stroke-width="0.45"/><circle cx="524.30" cy="262.60" r="0.95" fill="#fff" stroke="#6f992c" stroke-width="0.45"/><text transform="translate(497.80 303.70) scale(0.43)" x="0" y="0" font-size="12.67" text-anchor="middle" fill="#333" font-weight="normal" dominant-baseline="central">15:50:00</text><text transform="translate(497.80 308.80) scale(0.43)" x="0" y="0" font-size="12.67" text-anchor="middle" fill="#333" font-weight="normal" dominant-baseline="central">2025-06-05</text><text transform="translate(547.30 303.70) scale(0.43)" x="0" y="0" font-size="12.67" text-anchor="middle" fill="#333" font-weight="normal" dominant-baseline="central">16:00:00</text><text transform="translate(547.30 308.80) scale(0.43)" x="0" y="0" font-size="12.67" text-anchor="middle" fill="#333" font-weight="normal" dominant-baseline="central">2025-06-05</text><text transform="translate(596.30 303.70) scale(0.43)" x="0" y="0" font-size="12.67" text-anchor="middle" fill="#333" font-weight="normal" dominant-baseline="central">16:10:00</text><text transform="translate(596.30 308.80) scale(0.43)" x="0" y="0" font-size="12.67" text-anchor="middle" fill="#333" font-weight="normal" dominant-baseline="central">2025-06-05</text><rect x="479.8" y="308.4" width="134.8" height="12.400000000000034" fill="#cdd6e4" fill-opacity="0.78"/><path d="M479.8 319.8 L512.8 319.2 L517.8 311.4 L614.6 311.4 V320.8 H479.8 Z" fill="#bccadd" fill-opacity="0.55"/><path d="M479.8 308.4 V320.8" stroke="#9fb4d2" stroke-width="0.5"/><rect x="478.90000000000003" y="312.20000000000005" width="1.8" height="4.8" rx="0.5" fill="#c4d3ea" stroke="#7f9cc6" stroke-width="0.4"/><path d="M614.6 308.4 V320.8" stroke="#9fb4d2" stroke-width="0.5"/><rect x="613.7" y="312.20000000000005" width="1.8" height="4.8" rx="0.5" fill="#c4d3ea" stroke="#7f9cc6" stroke-width="0.4"/><path d="M117.4 362.70 H251.4" stroke="#c8c8c8" stroke-width="0.45"/><path d="M117.4 371.40 H251.4" stroke="#c8c8c8" stroke-width="0.45"/><path d="M117.4 380.10 H251.4" stroke="#c8c8c8" stroke-width="0.45"/><path d="M117.4 388.80 H251.4" stroke="#c8c8c8" stroke-width="0.45"/><path d="M117.4 397.50 H251.4" stroke="#c8c8c8" stroke-width="0.45"/><path d="M117.4 406.20 H251.4" stroke="#c8c8c8" stroke-width="0.45"/><path d="M135.50 362.7 V414.8" stroke="#c8c8c8" stroke-width="0.45"/><path d="M184.40 362.7 V414.8" stroke="#c8c8c8" stroke-width="0.45"/><path d="M234.50 362.7 V414.8" stroke="#c8c8c8" stroke-width="0.45"/><path d="M251.4 362.7 V414.8" stroke="#c8c8c8" stroke-width="0.45"/><path d="M117.4 362.7 V414.8 H251.4" stroke="#555" stroke-width="0.75" fill="none"/><path d="M115.2 362.70 H117.4" stroke="#555" stroke-width="0.5"/><text transform="translate(114.00 362.70) scale(0.43)" x="0" y="0" font-size="12.67" text-anchor="end" fill="#333" font-weight="normal" dominant-baseline="central">120</text><path d="M115.2 371.40 H117.4" stroke="#555" stroke-width="0.5"/><text transform="translate(114.00 371.40) scale(0.43)" x="0" y="0" font-size="12.67" text-anchor="end" fill="#333" font-weight="normal" dominant-baseline="central">100</text><path d="M115.2 380.10 H117.4" stroke="#555" stroke-width="0.5"/><text transform="translate(114.00 380.10) scale(0.43)" x="0" y="0" font-size="12.67" text-anchor="end" fill="#333" font-weight="normal" dominant-baseline="central">80</text><path d="M115.2 388.80 H117.4" stroke="#555" stroke-width="0.5"/><text transform="translate(114.00 388.80) scale(0.43)" x="0" y="0" font-size="12.67" text-anchor="end" fill="#333" font-weight="normal" dominant-baseline="central">60</text><path d="M115.2 397.50 H117.4" stroke="#555" stroke-width="0.5"/><text transform="translate(114.00 397.50) scale(0.43)" x="0" y="0" font-size="12.67" text-anchor="end" fill="#333" font-weight="normal" dominant-baseline="central">40</text><path d="M115.2 406.20 H117.4" stroke="#555" stroke-width="0.5"/><text transform="translate(114.00 406.20) scale(0.43)" x="0" y="0" font-size="12.67" text-anchor="end" fill="#333" font-weight="normal" dominant-baseline="central">20</text><path d="M115.2 414.90 H117.4" stroke="#555" stroke-width="0.5"/><text transform="translate(114.00 414.90) scale(0.43)" x="0" y="0" font-size="12.67" text-anchor="end" fill="#333" font-weight="normal" dominant-baseline="central">0</text><path d="M135.50 414.8 V416.40000000000003" stroke="#555" stroke-width="0.5"/><path d="M184.40 414.8 V416.40000000000003" stroke="#555" stroke-width="0.5"/><path d="M234.50 414.8 V416.40000000000003" stroke="#555" stroke-width="0.5"/><polyline points="117.40,414.80 161.40,414.80 166.60,370.40 251.40,370.40" fill="none" stroke="#6f992c" stroke-width="0.95" stroke-linejoin="round"/><circle cx="117.40" cy="414.80" r="0.95" fill="#fff" stroke="#6f992c" stroke-width="0.45"/><circle cx="122.29" cy="414.80" r="0.95" fill="#fff" stroke="#6f992c" stroke-width="0.45"/><circle cx="127.18" cy="414.80" r="0.95" fill="#fff" stroke="#6f992c" stroke-width="0.45"/><circle cx="132.07" cy="414.80" r="0.95" fill="#fff" stroke="#6f992c" stroke-width="0.45"/><circle cx="136.96" cy="414.80" r="0.95" fill="#fff" stroke="#6f992c" stroke-width="0.45"/><circle cx="141.84" cy="414.80" r="0.95" fill="#fff" stroke="#6f992c" stroke-width="0.45"/><circle cx="146.73" cy="414.80" r="0.95" fill="#fff" stroke="#6f992c" stroke-width="0.45"/><circle cx="151.62" cy="414.80" r="0.95" fill="#fff" stroke="#6f992c" stroke-width="0.45"/><circle cx="156.51" cy="414.80" r="0.95" fill="#fff" stroke="#6f992c" stroke-width="0.45"/><circle cx="161.40" cy="414.80" r="0.95" fill="#fff" stroke="#6f992c" stroke-width="0.45"/><circle cx="166.60" cy="370.40" r="0.95" fill="#fff" stroke="#6f992c" stroke-width="0.45"/><circle cx="171.59" cy="370.40" r="0.95" fill="#fff" stroke="#6f992c" stroke-width="0.45"/><circle cx="176.58" cy="370.40" r="0.95" fill="#fff" stroke="#6f992c" stroke-width="0.45"/><circle cx="181.56" cy="370.40" r="0.95" fill="#fff" stroke="#6f992c" stroke-width="0.45"/><circle cx="186.55" cy="370.40" r="0.95" fill="#fff" stroke="#6f992c" stroke-width="0.45"/><circle cx="191.54" cy="370.40" r="0.95" fill="#fff" stroke="#6f992c" stroke-width="0.45"/><circle cx="196.53" cy="370.40" r="0.95" fill="#fff" stroke="#6f992c" stroke-width="0.45"/><circle cx="201.52" cy="370.40" r="0.95" fill="#fff" stroke="#6f992c" stroke-width="0.45"/><circle cx="206.51" cy="370.40" r="0.95" fill="#fff" stroke="#6f992c" stroke-width="0.45"/><circle cx="211.49" cy="370.40" r="0.95" fill="#fff" stroke="#6f992c" stroke-width="0.45"/><circle cx="216.48" cy="370.40" r="0.95" fill="#fff" stroke="#6f992c" stroke-width="0.45"/><circle cx="221.47" cy="370.40" r="0.95" fill="#fff" stroke="#6f992c" stroke-width="0.45"/><circle cx="226.46" cy="370.40" r="0.95" fill="#fff" stroke="#6f992c" stroke-width="0.45"/><circle cx="231.45" cy="370.40" r="0.95" fill="#fff" stroke="#6f992c" stroke-width="0.45"/><circle cx="236.44" cy="370.40" r="0.95" fill="#fff" stroke="#6f992c" stroke-width="0.45"/><circle cx="241.42" cy="370.40" r="0.95" fill="#fff" stroke="#6f992c" stroke-width="0.45"/><circle cx="246.41" cy="370.40" r="0.95" fill="#fff" stroke="#6f992c" stroke-width="0.45"/><circle cx="251.40" cy="370.40" r="0.95" fill="#fff" stroke="#6f992c" stroke-width="0.45"/><path d="M298.9 362.70 H432.6" stroke="#c8c8c8" stroke-width="0.45"/><path d="M298.9 373.10 H432.6" stroke="#c8c8c8" stroke-width="0.45"/><path d="M298.9 383.50 H432.6" stroke="#c8c8c8" stroke-width="0.45"/><path d="M298.9 393.90 H432.6" stroke="#c8c8c8" stroke-width="0.45"/><path d="M298.9 404.30 H432.6" stroke="#c8c8c8" stroke-width="0.45"/><path d="M316.20 362.7 V414.8" stroke="#c8c8c8" stroke-width="0.45"/><path d="M365.50 362.7 V414.8" stroke="#c8c8c8" stroke-width="0.45"/><path d="M415.20 362.7 V414.8" stroke="#c8c8c8" stroke-width="0.45"/><path d="M432.6 362.7 V414.8" stroke="#c8c8c8" stroke-width="0.45"/><path d="M298.9 362.7 V414.8 H432.6" stroke="#555" stroke-width="0.75" fill="none"/><path d="M296.7 362.70 H298.9" stroke="#555" stroke-width="0.5"/><text transform="translate(295.50 362.70) scale(0.43)" x="0" y="0" font-size="12.67" text-anchor="end" fill="#333" font-weight="normal" dominant-baseline="central">1</text><path d="M296.7 373.10 H298.9" stroke="#555" stroke-width="0.5"/><text transform="translate(295.50 373.10) scale(0.43)" x="0" y="0" font-size="12.67" text-anchor="end" fill="#333" font-weight="normal" dominant-baseline="central">0.8</text><path d="M296.7 383.50 H298.9" stroke="#555" stroke-width="0.5"/><text transform="translate(295.50 383.50) scale(0.43)" x="0" y="0" font-size="12.67" text-anchor="end" fill="#333" font-weight="normal" dominant-baseline="central">0.6</text><path d="M296.7 393.90 H298.9" stroke="#555" stroke-width="0.5"/><text transform="translate(295.50 393.90) scale(0.43)" x="0" y="0" font-size="12.67" text-anchor="end" fill="#333" font-weight="normal" dominant-baseline="central">0.4</text><path d="M296.7 404.30 H298.9" stroke="#555" stroke-width="0.5"/><text transform="translate(295.50 404.30) scale(0.43)" x="0" y="0" font-size="12.67" text-anchor="end" fill="#333" font-weight="normal" dominant-baseline="central">0.2</text><path d="M296.7 414.70 H298.9" stroke="#555" stroke-width="0.5"/><text transform="translate(295.50 414.70) scale(0.43)" x="0" y="0" font-size="12.67" text-anchor="end" fill="#333" font-weight="normal" dominant-baseline="central">0</text><path d="M316.20 414.8 V416.40000000000003" stroke="#555" stroke-width="0.5"/><path d="M365.50 414.8 V416.40000000000003" stroke="#555" stroke-width="0.5"/><path d="M415.20 414.8 V416.40000000000003" stroke="#555" stroke-width="0.5"/><polyline points="298.90,414.80 312.80,414.80 317.80,362.90 432.60,362.90" fill="none" stroke="#6f992c" stroke-width="0.95" stroke-linejoin="round"/><circle cx="298.90" cy="414.80" r="0.95" fill="#fff" stroke="#6f992c" stroke-width="0.45"/><circle cx="300.64" cy="414.80" r="0.95" fill="#fff" stroke="#6f992c" stroke-width="0.45"/><circle cx="302.38" cy="414.80" r="0.95" fill="#fff" stroke="#6f992c" stroke-width="0.45"/><circle cx="304.11" cy="414.80" r="0.95" fill="#fff" stroke="#6f992c" stroke-width="0.45"/><circle cx="305.85" cy="414.80" r="0.95" fill="#fff" stroke="#6f992c" stroke-width="0.45"/><circle cx="307.59" cy="414.80" r="0.95" fill="#fff" stroke="#6f992c" stroke-width="0.45"/><circle cx="309.32" cy="414.80" r="0.95" fill="#fff" stroke="#6f992c" stroke-width="0.45"/><circle cx="311.06" cy="414.80" r="0.95" fill="#fff" stroke="#6f992c" stroke-width="0.45"/><circle cx="312.80" cy="414.80" r="0.95" fill="#fff" stroke="#6f992c" stroke-width="0.45"/><circle cx="317.80" cy="362.90" r="0.95" fill="#fff" stroke="#6f992c" stroke-width="0.45"/><circle cx="319.49" cy="362.90" r="0.95" fill="#fff" stroke="#6f992c" stroke-width="0.45"/><circle cx="321.18" cy="362.90" r="0.95" fill="#fff" stroke="#6f992c" stroke-width="0.45"/><circle cx="322.86" cy="362.90" r="0.95" fill="#fff" stroke="#6f992c" stroke-width="0.45"/><circle cx="324.55" cy="362.90" r="0.95" fill="#fff" stroke="#6f992c" stroke-width="0.45"/><circle cx="326.24" cy="362.90" r="0.95" fill="#fff" stroke="#6f992c" stroke-width="0.45"/><circle cx="327.93" cy="362.90" r="0.95" fill="#fff" stroke="#6f992c" stroke-width="0.45"/><circle cx="329.62" cy="362.90" r="0.95" fill="#fff" stroke="#6f992c" stroke-width="0.45"/><circle cx="331.31" cy="362.90" r="0.95" fill="#fff" stroke="#6f992c" stroke-width="0.45"/><circle cx="332.99" cy="362.90" r="0.95" fill="#fff" stroke="#6f992c" stroke-width="0.45"/><circle cx="334.68" cy="362.90" r="0.95" fill="#fff" stroke="#6f992c" stroke-width="0.45"/><circle cx="336.37" cy="362.90" r="0.95" fill="#fff" stroke="#6f992c" stroke-width="0.45"/><circle cx="338.06" cy="362.90" r="0.95" fill="#fff" stroke="#6f992c" stroke-width="0.45"/><circle cx="339.75" cy="362.90" r="0.95" fill="#fff" stroke="#6f992c" stroke-width="0.45"/><circle cx="341.44" cy="362.90" r="0.95" fill="#fff" stroke="#6f992c" stroke-width="0.45"/><circle cx="343.12" cy="362.90" r="0.95" fill="#fff" stroke="#6f992c" stroke-width="0.45"/><circle cx="344.81" cy="362.90" r="0.95" fill="#fff" stroke="#6f992c" stroke-width="0.45"/><circle cx="346.50" cy="362.90" r="0.95" fill="#fff" stroke="#6f992c" stroke-width="0.45"/><circle cx="348.19" cy="362.90" r="0.95" fill="#fff" stroke="#6f992c" stroke-width="0.45"/><circle cx="349.88" cy="362.90" r="0.95" fill="#fff" stroke="#6f992c" stroke-width="0.45"/><circle cx="351.56" cy="362.90" r="0.95" fill="#fff" stroke="#6f992c" stroke-width="0.45"/><circle cx="353.25" cy="362.90" r="0.95" fill="#fff" stroke="#6f992c" stroke-width="0.45"/><circle cx="354.94" cy="362.90" r="0.95" fill="#fff" stroke="#6f992c" stroke-width="0.45"/><circle cx="356.63" cy="362.90" r="0.95" fill="#fff" stroke="#6f992c" stroke-width="0.45"/><circle cx="358.32" cy="362.90" r="0.95" fill="#fff" stroke="#6f992c" stroke-width="0.45"/><circle cx="360.01" cy="362.90" r="0.95" fill="#fff" stroke="#6f992c" stroke-width="0.45"/><circle cx="361.69" cy="362.90" r="0.95" fill="#fff" stroke="#6f992c" stroke-width="0.45"/><circle cx="363.38" cy="362.90" r="0.95" fill="#fff" stroke="#6f992c" stroke-width="0.45"/><circle cx="365.07" cy="362.90" r="0.95" fill="#fff" stroke="#6f992c" stroke-width="0.45"/><circle cx="366.76" cy="362.90" r="0.95" fill="#fff" stroke="#6f992c" stroke-width="0.45"/><circle cx="368.45" cy="362.90" r="0.95" fill="#fff" stroke="#6f992c" stroke-width="0.45"/><circle cx="370.14" cy="362.90" r="0.95" fill="#fff" stroke="#6f992c" stroke-width="0.45"/><circle cx="371.82" cy="362.90" r="0.95" fill="#fff" stroke="#6f992c" stroke-width="0.45"/><circle cx="373.51" cy="362.90" r="0.95" fill="#fff" stroke="#6f992c" stroke-width="0.45"/><circle cx="375.20" cy="362.90" r="0.95" fill="#fff" stroke="#6f992c" stroke-width="0.45"/><circle cx="376.89" cy="362.90" r="0.95" fill="#fff" stroke="#6f992c" stroke-width="0.45"/><circle cx="378.58" cy="362.90" r="0.95" fill="#fff" stroke="#6f992c" stroke-width="0.45"/><circle cx="380.26" cy="362.90" r="0.95" fill="#fff" stroke="#6f992c" stroke-width="0.45"/><circle cx="381.95" cy="362.90" r="0.95" fill="#fff" stroke="#6f992c" stroke-width="0.45"/><circle cx="383.64" cy="362.90" r="0.95" fill="#fff" stroke="#6f992c" stroke-width="0.45"/><circle cx="385.33" cy="362.90" r="0.95" fill="#fff" stroke="#6f992c" stroke-width="0.45"/><circle cx="387.02" cy="362.90" r="0.95" fill="#fff" stroke="#6f992c" stroke-width="0.45"/><circle cx="388.71" cy="362.90" r="0.95" fill="#fff" stroke="#6f992c" stroke-width="0.45"/><circle cx="390.39" cy="362.90" r="0.95" fill="#fff" stroke="#6f992c" stroke-width="0.45"/><circle cx="392.08" cy="362.90" r="0.95" fill="#fff" stroke="#6f992c" stroke-width="0.45"/><circle cx="393.77" cy="362.90" r="0.95" fill="#fff" stroke="#6f992c" stroke-width="0.45"/><circle cx="395.46" cy="362.90" r="0.95" fill="#fff" stroke="#6f992c" stroke-width="0.45"/><circle cx="397.15" cy="362.90" r="0.95" fill="#fff" stroke="#6f992c" stroke-width="0.45"/><circle cx="398.84" cy="362.90" r="0.95" fill="#fff" stroke="#6f992c" stroke-width="0.45"/><circle cx="400.52" cy="362.90" r="0.95" fill="#fff" stroke="#6f992c" stroke-width="0.45"/><circle cx="402.21" cy="362.90" r="0.95" fill="#fff" stroke="#6f992c" stroke-width="0.45"/><circle cx="403.90" cy="362.90" r="0.95" fill="#fff" stroke="#6f992c" stroke-width="0.45"/><circle cx="405.59" cy="362.90" r="0.95" fill="#fff" stroke="#6f992c" stroke-width="0.45"/><circle cx="407.28" cy="362.90" r="0.95" fill="#fff" stroke="#6f992c" stroke-width="0.45"/><circle cx="408.96" cy="362.90" r="0.95" fill="#fff" stroke="#6f992c" stroke-width="0.45"/><circle cx="410.65" cy="362.90" r="0.95" fill="#fff" stroke="#6f992c" stroke-width="0.45"/><circle cx="412.34" cy="362.90" r="0.95" fill="#fff" stroke="#6f992c" stroke-width="0.45"/><circle cx="414.03" cy="362.90" r="0.95" fill="#fff" stroke="#6f992c" stroke-width="0.45"/><circle cx="415.72" cy="362.90" r="0.95" fill="#fff" stroke="#6f992c" stroke-width="0.45"/><circle cx="417.41" cy="362.90" r="0.95" fill="#fff" stroke="#6f992c" stroke-width="0.45"/><circle cx="419.09" cy="362.90" r="0.95" fill="#fff" stroke="#6f992c" stroke-width="0.45"/><circle cx="420.78" cy="362.90" r="0.95" fill="#fff" stroke="#6f992c" stroke-width="0.45"/><circle cx="422.47" cy="362.90" r="0.95" fill="#fff" stroke="#6f992c" stroke-width="0.45"/><circle cx="424.16" cy="362.90" r="0.95" fill="#fff" stroke="#6f992c" stroke-width="0.45"/><circle cx="425.85" cy="362.90" r="0.95" fill="#fff" stroke="#6f992c" stroke-width="0.45"/><circle cx="427.54" cy="362.90" r="0.95" fill="#fff" stroke="#6f992c" stroke-width="0.45"/><circle cx="429.22" cy="362.90" r="0.95" fill="#fff" stroke="#6f992c" stroke-width="0.45"/><circle cx="430.91" cy="362.90" r="0.95" fill="#fff" stroke="#6f992c" stroke-width="0.45"/><circle cx="432.60" cy="362.90" r="0.95" fill="#fff" stroke="#6f992c" stroke-width="0.45"/><path d="M479.4 362.70 H613.7" stroke="#c8c8c8" stroke-width="0.45"/><path d="M479.4 371.40 H613.7" stroke="#c8c8c8" stroke-width="0.45"/><path d="M479.4 380.10 H613.7" stroke="#c8c8c8" stroke-width="0.45"/><path d="M479.4 388.80 H613.7" stroke="#c8c8c8" stroke-width="0.45"/><path d="M479.4 397.50 H613.7" stroke="#c8c8c8" stroke-width="0.45"/><path d="M479.4 406.20 H613.7" stroke="#c8c8c8" stroke-width="0.45"/><path d="M497.40 362.7 V414.8" stroke="#c8c8c8" stroke-width="0.45"/><path d="M547.30 362.7 V414.8" stroke="#c8c8c8" stroke-width="0.45"/><path d="M596.30 362.7 V414.8" stroke="#c8c8c8" stroke-width="0.45"/><path d="M613.7 362.7 V414.8" stroke="#c8c8c8" stroke-width="0.45"/><path d="M479.4 362.7 V414.8 H613.7" stroke="#555" stroke-width="0.75" fill="none"/><path d="M477.2 362.70 H479.4" stroke="#555" stroke-width="0.5"/><text transform="translate(476.00 362.70) scale(0.43)" x="0" y="0" font-size="12.67" text-anchor="end" fill="#333" font-weight="normal" dominant-baseline="central">120</text><path d="M477.2 371.40 H479.4" stroke="#555" stroke-width="0.5"/><text transform="translate(476.00 371.40) scale(0.43)" x="0" y="0" font-size="12.67" text-anchor="end" fill="#333" font-weight="normal" dominant-baseline="central">100</text><path d="M477.2 380.10 H479.4" stroke="#555" stroke-width="0.5"/><text transform="translate(476.00 380.10) scale(0.43)" x="0" y="0" font-size="12.67" text-anchor="end" fill="#333" font-weight="normal" dominant-baseline="central">80</text><path d="M477.2 388.80 H479.4" stroke="#555" stroke-width="0.5"/><text transform="translate(476.00 388.80) scale(0.43)" x="0" y="0" font-size="12.67" text-anchor="end" fill="#333" font-weight="normal" dominant-baseline="central">60</text><path d="M477.2 397.50 H479.4" stroke="#555" stroke-width="0.5"/><text transform="translate(476.00 397.50) scale(0.43)" x="0" y="0" font-size="12.67" text-anchor="end" fill="#333" font-weight="normal" dominant-baseline="central">40</text><path d="M477.2 406.20 H479.4" stroke="#555" stroke-width="0.5"/><text transform="translate(476.00 406.20) scale(0.43)" x="0" y="0" font-size="12.67" text-anchor="end" fill="#333" font-weight="normal" dominant-baseline="central">20</text><path d="M477.2 414.90 H479.4" stroke="#555" stroke-width="0.5"/><text transform="translate(476.00 414.90) scale(0.43)" x="0" y="0" font-size="12.67" text-anchor="end" fill="#333" font-weight="normal" dominant-baseline="central">0</text><path d="M497.40 414.8 V416.40000000000003" stroke="#555" stroke-width="0.5"/><path d="M547.30 414.8 V416.40000000000003" stroke="#555" stroke-width="0.5"/><path d="M596.30 414.8 V416.40000000000003" stroke="#555" stroke-width="0.5"/><polyline points="479.40,414.80 494.40,414.80 499.30,367.20 504.50,367.20 509.50,410.20 613.70,410.20" fill="none" stroke="#6f992c" stroke-width="0.95" stroke-linejoin="round"/><circle cx="479.40" cy="414.80" r="0.95" fill="#fff" stroke="#6f992c" stroke-width="0.45"/><circle cx="481.54" cy="414.80" r="0.95" fill="#fff" stroke="#6f992c" stroke-width="0.45"/><circle cx="483.69" cy="414.80" r="0.95" fill="#fff" stroke="#6f992c" stroke-width="0.45"/><circle cx="485.83" cy="414.80" r="0.95" fill="#fff" stroke="#6f992c" stroke-width="0.45"/><circle cx="487.97" cy="414.80" r="0.95" fill="#fff" stroke="#6f992c" stroke-width="0.45"/><circle cx="490.11" cy="414.80" r="0.95" fill="#fff" stroke="#6f992c" stroke-width="0.45"/><circle cx="492.26" cy="414.80" r="0.95" fill="#fff" stroke="#6f992c" stroke-width="0.45"/><circle cx="494.40" cy="414.80" r="0.95" fill="#fff" stroke="#6f992c" stroke-width="0.45"/><circle cx="499.30" cy="367.20" r="0.95" fill="#fff" stroke="#6f992c" stroke-width="0.45"/><circle cx="501.90" cy="367.20" r="0.95" fill="#fff" stroke="#6f992c" stroke-width="0.45"/><circle cx="504.50" cy="367.20" r="0.95" fill="#fff" stroke="#6f992c" stroke-width="0.45"/><circle cx="509.50" cy="410.20" r="0.95" fill="#fff" stroke="#6f992c" stroke-width="0.45"/><circle cx="511.72" cy="410.20" r="0.95" fill="#fff" stroke="#6f992c" stroke-width="0.45"/><circle cx="513.93" cy="410.20" r="0.95" fill="#fff" stroke="#6f992c" stroke-width="0.45"/><circle cx="516.15" cy="410.20" r="0.95" fill="#fff" stroke="#6f992c" stroke-width="0.45"/><circle cx="518.37" cy="410.20" r="0.95" fill="#fff" stroke="#6f992c" stroke-width="0.45"/><circle cx="520.59" cy="410.20" r="0.95" fill="#fff" stroke="#6f992c" stroke-width="0.45"/><circle cx="522.80" cy="410.20" r="0.95" fill="#fff" stroke="#6f992c" stroke-width="0.45"/><circle cx="525.02" cy="410.20" r="0.95" fill="#fff" stroke="#6f992c" stroke-width="0.45"/><circle cx="527.24" cy="410.20" r="0.95" fill="#fff" stroke="#6f992c" stroke-width="0.45"/><circle cx="529.45" cy="410.20" r="0.95" fill="#fff" stroke="#6f992c" stroke-width="0.45"/><circle cx="531.67" cy="410.20" r="0.95" fill="#fff" stroke="#6f992c" stroke-width="0.45"/><circle cx="533.89" cy="410.20" r="0.95" fill="#fff" stroke="#6f992c" stroke-width="0.45"/><circle cx="536.10" cy="410.20" r="0.95" fill="#fff" stroke="#6f992c" stroke-width="0.45"/><circle cx="538.32" cy="410.20" r="0.95" fill="#fff" stroke="#6f992c" stroke-width="0.45"/><circle cx="540.54" cy="410.20" r="0.95" fill="#fff" stroke="#6f992c" stroke-width="0.45"/><circle cx="542.76" cy="410.20" r="0.95" fill="#fff" stroke="#6f992c" stroke-width="0.45"/><circle cx="544.97" cy="410.20" r="0.95" fill="#fff" stroke="#6f992c" stroke-width="0.45"/><circle cx="547.19" cy="410.20" r="0.95" fill="#fff" stroke="#6f992c" stroke-width="0.45"/><circle cx="549.41" cy="410.20" r="0.95" fill="#fff" stroke="#6f992c" stroke-width="0.45"/><circle cx="551.62" cy="410.20" r="0.95" fill="#fff" stroke="#6f992c" stroke-width="0.45"/><circle cx="553.84" cy="410.20" r="0.95" fill="#fff" stroke="#6f992c" stroke-width="0.45"/><circle cx="556.06" cy="410.20" r="0.95" fill="#fff" stroke="#6f992c" stroke-width="0.45"/><circle cx="558.27" cy="410.20" r="0.95" fill="#fff" stroke="#6f992c" stroke-width="0.45"/><circle cx="560.49" cy="410.20" r="0.95" fill="#fff" stroke="#6f992c" stroke-width="0.45"/><circle cx="562.71" cy="410.20" r="0.95" fill="#fff" stroke="#6f992c" stroke-width="0.45"/><circle cx="564.93" cy="410.20" r="0.95" fill="#fff" stroke="#6f992c" stroke-width="0.45"/><circle cx="567.14" cy="410.20" r="0.95" fill="#fff" stroke="#6f992c" stroke-width="0.45"/><circle cx="569.36" cy="410.20" r="0.95" fill="#fff" stroke="#6f992c" stroke-width="0.45"/><circle cx="571.58" cy="410.20" r="0.95" fill="#fff" stroke="#6f992c" stroke-width="0.45"/><circle cx="573.79" cy="410.20" r="0.95" fill="#fff" stroke="#6f992c" stroke-width="0.45"/><circle cx="576.01" cy="410.20" r="0.95" fill="#fff" stroke="#6f992c" stroke-width="0.45"/><circle cx="578.23" cy="410.20" r="0.95" fill="#fff" stroke="#6f992c" stroke-width="0.45"/><circle cx="580.44" cy="410.20" r="0.95" fill="#fff" stroke="#6f992c" stroke-width="0.45"/><circle cx="582.66" cy="410.20" r="0.95" fill="#fff" stroke="#6f992c" stroke-width="0.45"/><circle cx="584.88" cy="410.20" r="0.95" fill="#fff" stroke="#6f992c" stroke-width="0.45"/><circle cx="587.10" cy="410.20" r="0.95" fill="#fff" stroke="#6f992c" stroke-width="0.45"/><circle cx="589.31" cy="410.20" r="0.95" fill="#fff" stroke="#6f992c" stroke-width="0.45"/><circle cx="591.53" cy="410.20" r="0.95" fill="#fff" stroke="#6f992c" stroke-width="0.45"/><circle cx="593.75" cy="410.20" r="0.95" fill="#fff" stroke="#6f992c" stroke-width="0.45"/><circle cx="595.96" cy="410.20" r="0.95" fill="#fff" stroke="#6f992c" stroke-width="0.45"/><circle cx="598.18" cy="410.20" r="0.95" fill="#fff" stroke="#6f992c" stroke-width="0.45"/><circle cx="600.40" cy="410.20" r="0.95" fill="#fff" stroke="#6f992c" stroke-width="0.45"/><circle cx="602.61" cy="410.20" r="0.95" fill="#fff" stroke="#6f992c" stroke-width="0.45"/><circle cx="604.83" cy="410.20" r="0.95" fill="#fff" stroke="#6f992c" stroke-width="0.45"/><circle cx="607.05" cy="410.20" r="0.95" fill="#fff" stroke="#6f992c" stroke-width="0.45"/><circle cx="609.27" cy="410.20" r="0.95" fill="#fff" stroke="#6f992c" stroke-width="0.45"/><circle cx="611.48" cy="410.20" r="0.95" fill="#fff" stroke="#6f992c" stroke-width="0.45"/><circle cx="613.70" cy="410.20" r="0.95" fill="#fff" stroke="#6f992c" stroke-width="0.45"/><text transform="translate(176.80 341.50) scale(0.43)" x="0" y="0" font-size="14.19" text-anchor="middle" fill="#222" font-weight="500" dominant-baseline="central">雷达水位计液高<tspan font-size="15.35" font-weight="bold" fill="#333">(cm)</tspan></text><text transform="translate(358.60 341.50) scale(0.43)" x="0" y="0" font-size="14.19" text-anchor="middle" fill="#222" font-weight="500" dominant-baseline="central">实时流量<tspan font-size="15.35" font-weight="bold" fill="#333">(m³/s)</tspan></text><text transform="translate(539.40 341.50) scale(0.43)" x="0" y="0" font-size="14.19" text-anchor="middle" fill="#222" font-weight="500" dominant-baseline="central">流速<tspan font-size="15.35" font-weight="bold" fill="#333">(cm/s)</tspan></text></g></svg></div>
<div style="left:886.51px;top:692.79px;width:143.02px;height:50.93px;background:rgba(40,40,40,.72);border-radius:4px;"></div>
<div class="t" style="left:892.09px;top:697.67px;font-size:14px;line-height:20px;color:#fff;font-weight:normal;letter-spacing:0.3px;">2025-06-05 15:58:21</div>
<div class="t" style="left:892.09px;top:719.30px;font-size:14px;line-height:20px;color:#fff;font-weight:normal;letter-spacing:0.3px;">风速(m/s):2.9</div>
<div style="left:1789.07px;top:563.26px;width:24.42px;height:24.42px;border:1px solid #ddd;border-radius:3px;background:#fff;"></div>
<div style="left:1820px;top:563.26px;width:23.02px;height:24.42px;border:1px solid #ddd;border-radius:3px;background:#fff;"></div>
<svg style="left:1779.07px;top:558.14px;" width="81.4" height="37.21" viewBox="765 240 35 16"><path d="M772 248.2 H774.2 M775.6 248.2 H777.8 M774.9 245.4 V251 " stroke="#555" stroke-width="0.6" fill="none"/><path d="M774.2 246.8 L775.6 249.6" stroke="#555" stroke-width="0.6"/><rect x="784.8" y="245.6" width="6" height="5.4" fill="#f2f2f2" stroke="#777" stroke-width="0.5"/><path d="M784.8 246.8 H790.8" stroke="#444" stroke-width="0.9" stroke-dasharray="1.2 0.8"/><path d="M786.4 248.6 H789.4 M786.4 249.8 H789.4" stroke="#999" stroke-width="0.4"/></svg>
<div style="left:1849.3px;top:593.95px;width:6.05px;height:368.6px;background:#f1f1f3;"></div>
<div style="left:1849.3px;top:631.16px;width:5.58px;height:125.81px;background:#4a4b52;border-radius:3px;"></div>
</div></body></html>
